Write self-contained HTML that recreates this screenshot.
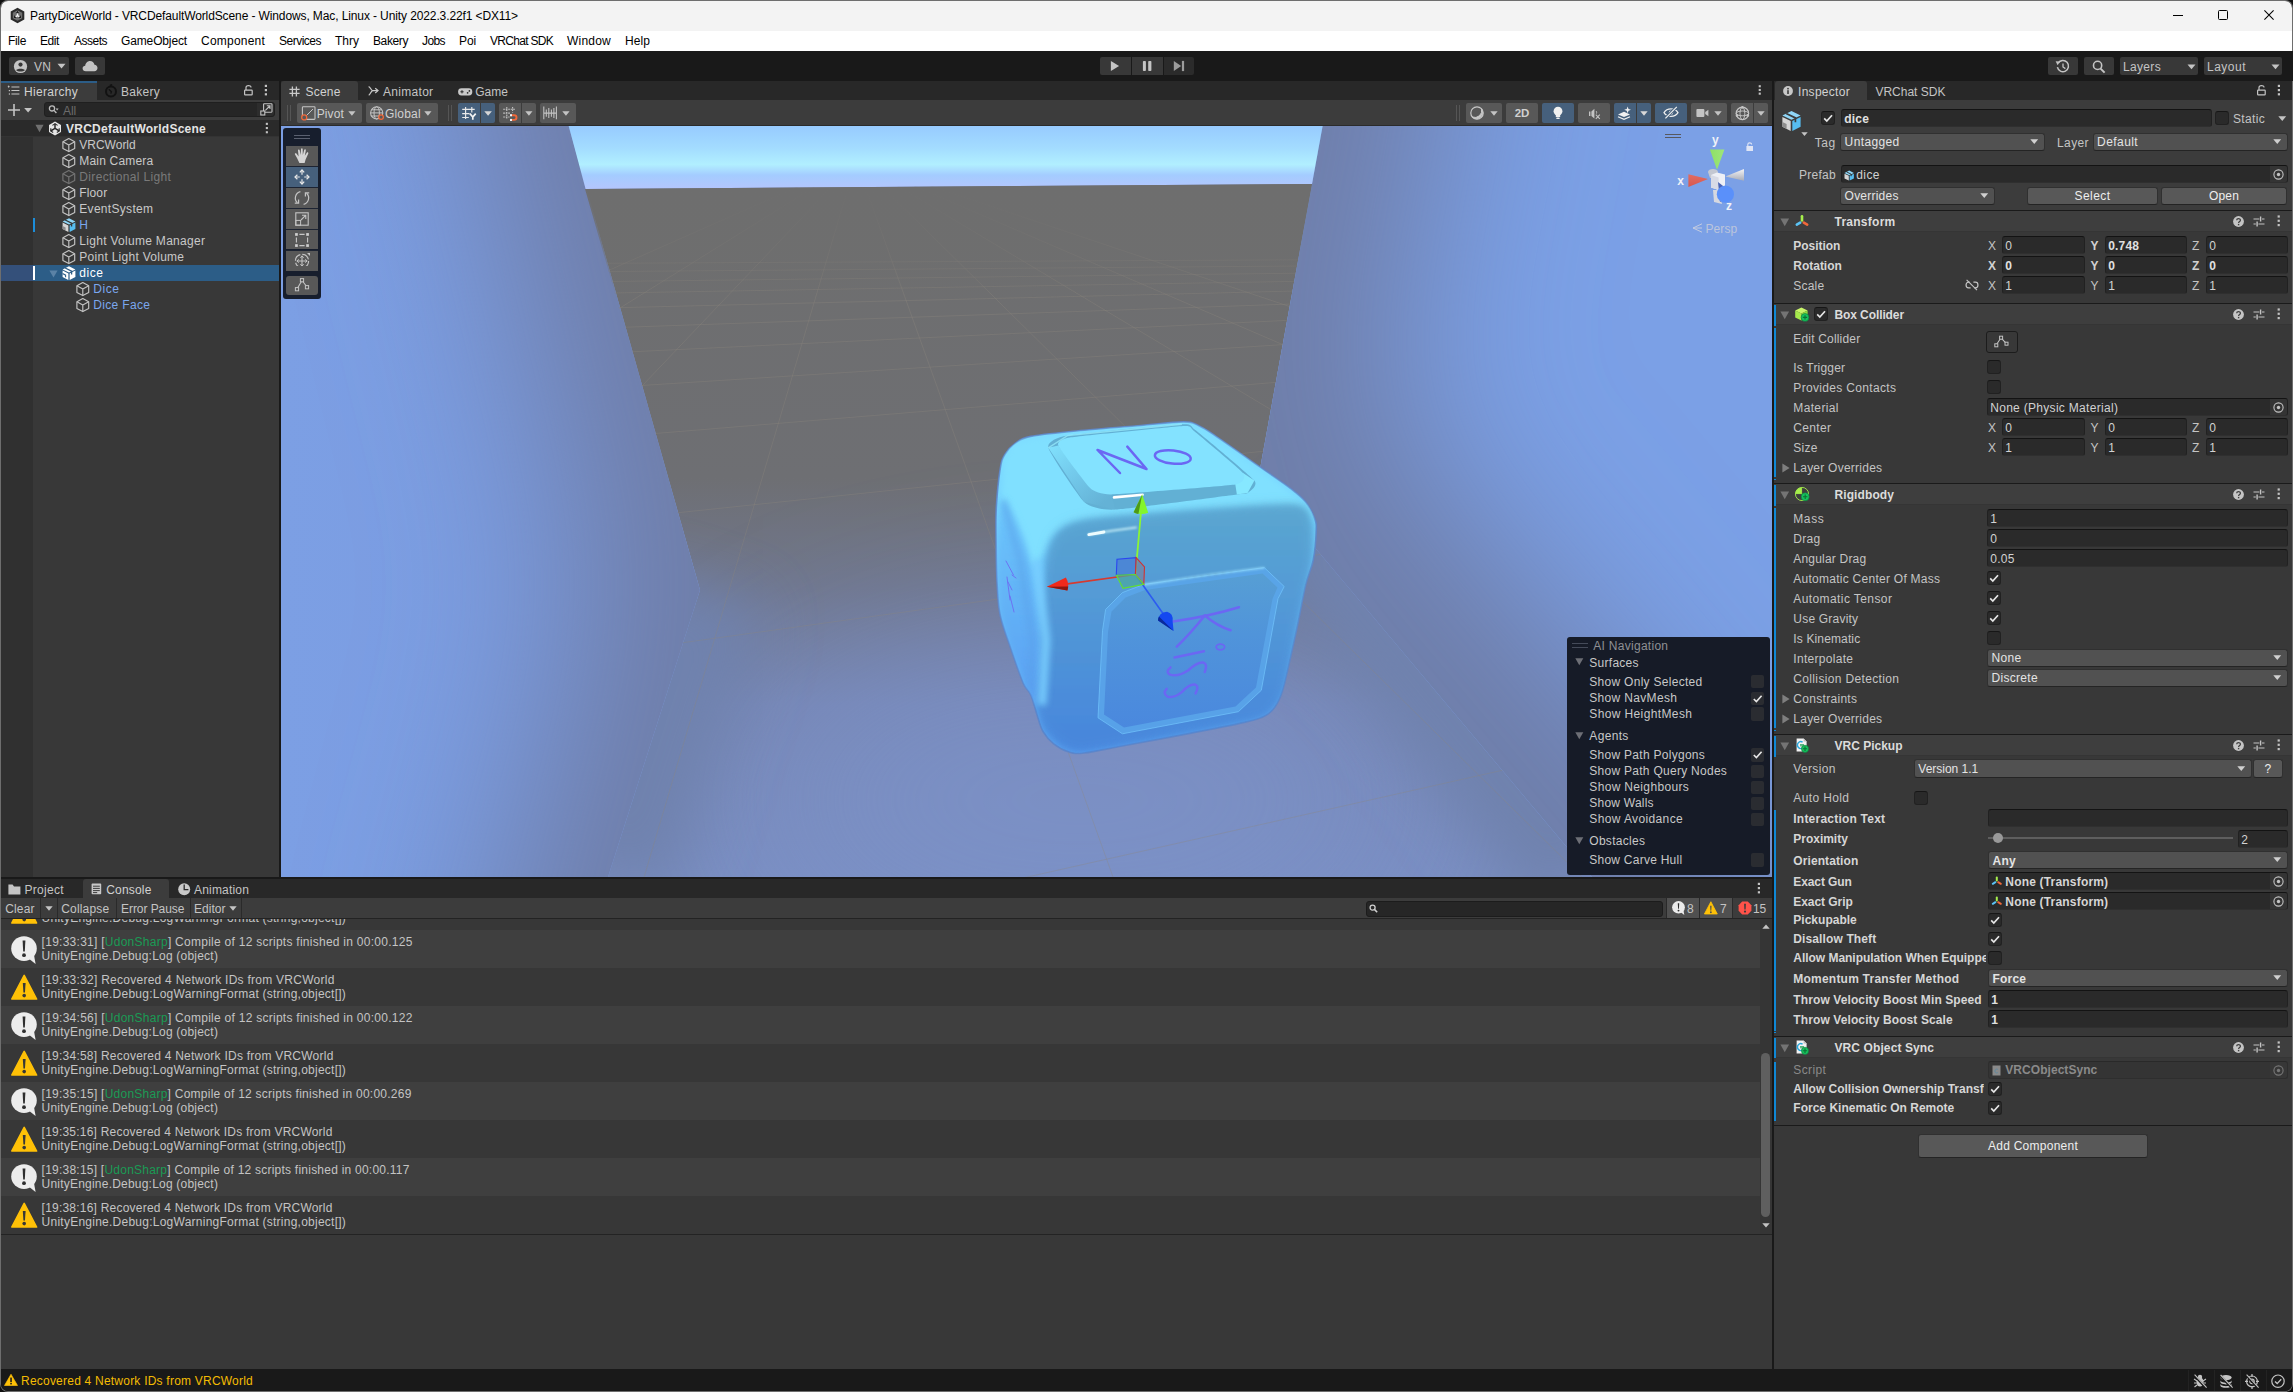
<!DOCTYPE html>
<html><head><meta charset="utf-8"><title>Unity</title>
<style>
html,body{margin:0;padding:0;background:#191919;}
body{width:2293px;height:1392px;position:relative;overflow:hidden;font-family:"Liberation Sans",sans-serif;font-size:12px;color:#c4c4c4;}
body div,body svg{position:absolute;box-sizing:border-box;}
svg{overflow:visible;display:block;}
</style></head><body>
<div style="left:0px;top:0px;width:2293px;height:1392px;background:#101010;"></div>
<div style="left:0px;top:0px;width:2293px;height:1392px;background:#6e6e6e;border-radius:8px;"></div>
<div style="left:1px;top:1px;width:2291px;height:1390px;background:#191919;border-radius:7px;"></div>
<div style="left:1px;top:1px;width:2291px;height:30px;background:#f3f3f3;border-radius:7px 7px 0 0;"></div>
<div style="left:1px;top:31px;width:2291px;height:20px;background:#ffffff;"></div>
<svg style="left:9px;top:7px;" width="17" height="17" viewBox="0 0 17 17"><path d="M8.5 0.8 L15.3 4.6 L15.3 12.4 L8.5 16.2 L1.7 12.4 L1.7 4.6 Z" fill="#2b2b2b"/>
    <path d="M8.5 3.2 L13.2 5.8 L13.2 11.2 L8.5 13.8 L3.8 11.2 L3.8 5.8 Z" fill="#6f6f6f"/>
    <path d="M8.5 4.2 L8.5 8.6 M8.5 8.6 L4.6 10.9 M8.5 8.6 L12.4 10.9" stroke="#f3f3f3" stroke-width="1.5" fill="none"/>
    <path d="M8.5 3.4 L10.2 6.2 L6.8 6.2 Z M4.2 11.3 L5.6 8.2 L7.4 11.0 Z M12.8 11.3 L11.4 8.2 L9.6 11.0 Z" fill="#1d1d1d"/></svg>
<div style="top:7.84px;font-size:12px;line-height:16px;letter-spacing:-0.111px;color:#000;white-space:nowrap;left:30px;">PartyDiceWorld - VRCDefaultWorldScene - Windows, Mac, Linux - Unity 2022.3.22f1 &lt;DX11&gt;</div>
<svg style="left:2160px;top:0px;" width="133" height="31" viewBox="0 0 133 31"><path d="M13 15.5 H23" stroke="#000" stroke-width="1"/>
    <rect x="58.5" y="10.5" width="9" height="9" fill="none" stroke="#000" stroke-width="1" rx="1"/>
    <path d="M104.4 10.4 L113.6 19.6 M113.6 10.4 L104.4 19.6" stroke="#000" stroke-width="1.05"/></svg>
<div style="top:32.84px;font-size:12px;line-height:16px;letter-spacing:-0.334px;color:#000;white-space:nowrap;left:8px;">File</div>
<div style="top:32.84px;font-size:12px;line-height:16px;letter-spacing:-0.420px;color:#000;white-space:nowrap;left:40px;">Edit</div>
<div style="top:32.84px;font-size:12px;line-height:16px;letter-spacing:-0.502px;color:#000;white-space:nowrap;left:74px;">Assets</div>
<div style="top:32.84px;font-size:12px;line-height:16px;letter-spacing:-0.136px;color:#000;white-space:nowrap;left:121px;">GameObject</div>
<div style="top:32.84px;font-size:12px;line-height:16px;letter-spacing:0.218px;color:#000;white-space:nowrap;left:201px;">Component</div>
<div style="top:32.84px;font-size:12px;line-height:16px;letter-spacing:-0.502px;color:#000;white-space:nowrap;left:279px;">Services</div>
<div style="top:32.84px;font-size:12px;line-height:16px;letter-spacing:0.000px;color:#000;white-space:nowrap;left:335px;">Thry</div>
<div style="top:32.84px;font-size:12px;line-height:16px;letter-spacing:-0.391px;color:#000;white-space:nowrap;left:373px;">Bakery</div>
<div style="top:32.84px;font-size:12px;line-height:16px;letter-spacing:-0.587px;color:#000;white-space:nowrap;left:422px;">Jobs</div>
<div style="top:32.84px;font-size:12px;line-height:16px;letter-spacing:-0.115px;color:#000;white-space:nowrap;left:459px;">Poi</div>
<div style="top:32.84px;font-size:12px;line-height:16px;letter-spacing:-0.703px;color:#000;white-space:nowrap;left:490px;">VRChat SDK</div>
<div style="top:32.84px;font-size:12px;line-height:16px;letter-spacing:0.220px;color:#000;white-space:nowrap;left:567px;">Window</div>
<div style="top:32.84px;font-size:12px;line-height:16px;letter-spacing:0.080px;color:#000;white-space:nowrap;left:625px;">Help</div>
<div style="left:1px;top:51px;width:2292px;height:30px;background:#191919;"></div>
<div style="left:9px;top:57px;width:60px;height:18px;background:#383838;border-radius:2px;"></div>
<div style="left:75px;top:57px;width:30px;height:18px;background:#383838;border-radius:2px;"></div>
<svg style="left:13px;top:59px;" width="15" height="15" viewBox="0 0 15 15"><circle cx="7.5" cy="7.5" r="6.6" fill="#c4c4c4"/><circle cx="7.5" cy="5.6" r="2.1" fill="#383838"/><path d="M3.2 11.2 C4 9.2 11 9.2 11.8 11.2 C10.5 13 4.5 13 3.2 11.2Z" fill="#383838"/></svg>
<div style="top:58.84px;font-size:12px;line-height:16px;letter-spacing:0.165px;color:#c4c4c4;white-space:nowrap;left:34px;">VN</div>
<svg style="left:57px;top:63px;" width="9" height="6" viewBox="0 0 9 6"><path d="M0.5 0.8 H8.5 L4.5 5.4Z" fill="#c4c4c4"/></svg>
<svg style="left:82px;top:60px;" width="16" height="12" viewBox="0 0 16 12"><path d="M3.8 11.2 C1.8 11.2 0.6 9.9 0.6 8.4 C0.6 6.9 1.8 5.8 3.2 5.8 C3.4 3.2 5.4 1 8 1 C10.3 1 12 2.6 12.5 4.8 C14.2 4.9 15.5 6.3 15.5 8 C15.5 9.8 14.1 11.2 12.4 11.2 Z" fill="#c4c4c4"/></svg>
<div style="left:1100px;top:57px;width:31px;height:18px;background:#383838;border-radius:2px 0 0 2px;"></div>
<div style="left:1132px;top:57px;width:31px;height:18px;background:#383838;"></div>
<div style="left:1164px;top:57px;width:30px;height:18px;background:#2b2b2b;border-radius:0 2px 2px 0;"></div>
<svg style="left:1100px;top:57px;" width="95" height="18" viewBox="0 0 95 18"><path d="M10.9 3.9 L19.1 9 L10.9 14.1Z" fill="#c4c4c4"/>
    <rect x="42.9" y="3.9" width="3" height="10.2" rx="0.8" fill="#c4c4c4"/><rect x="48.2" y="3.9" width="3.2" height="10.2" rx="0.8" fill="#c4c4c4"/>
    <path d="M73.8 3.9 L81.2 9 L73.8 14.1Z" fill="#9c9c9c"/><rect x="81.9" y="3.9" width="2.2" height="10.2" fill="#9c9c9c"/></svg>
<div style="left:2048px;top:57px;width:30px;height:18px;background:#383838;border-radius:2px;"></div>
<div style="left:2084px;top:57px;width:30px;height:18px;background:#383838;border-radius:2px;"></div>
<div style="left:2120px;top:57px;width:78px;height:18px;background:#383838;border-radius:2px;"></div>
<div style="left:2204px;top:57px;width:78px;height:18px;background:#383838;border-radius:2px;"></div>
<svg style="left:2055px;top:59px;" width="16" height="15" viewBox="0 0 16 15"><path d="M3.2 4.0 A5.6 5.6 0 1 1 2.4 8.2" fill="none" stroke="#c4c4c4" stroke-width="1.5"/><path d="M0.6 2.2 L4.9 2.6 L2.6 6.2Z" fill="#c4c4c4"/><path d="M8 4.4 V8 L10.4 9.6" fill="none" stroke="#c4c4c4" stroke-width="1.3"/></svg>
<svg style="left:2091px;top:59px;" width="16" height="15" viewBox="0 0 16 15"><circle cx="6.6" cy="6.4" r="4.1" fill="none" stroke="#c4c4c4" stroke-width="1.6"/><path d="M9.6 9.6 L13.6 13.6" stroke="#c4c4c4" stroke-width="2"/></svg>
<div style="top:58.84px;font-size:12px;line-height:16px;letter-spacing:0.330px;color:#c4c4c4;white-space:nowrap;left:2123px;">Layers</div>
<svg style="left:2187px;top:64.4px;" width="8.4" height="5.6" viewBox="0 0 8.4 5.6"><path d="M0.5 0.5 H8.5 L4.5 5.2Z" fill="#c4c4c4"/></svg>
<div style="top:58.84px;font-size:12px;line-height:16px;letter-spacing:0.495px;color:#c4c4c4;white-space:nowrap;left:2207px;">Layout</div>
<svg style="left:2270.8px;top:64.4px;" width="8.4" height="5.6" viewBox="0 0 8.4 5.6"><path d="M0.5 0.5 H8.5 L4.5 5.2Z" fill="#c4c4c4"/></svg>
<div style="left:1px;top:1369px;width:2291px;height:22px;background:#191919;border-radius:0 0 7px 7px;"></div>
<svg style="left:3.6px;top:1372.8px;" width="14" height="13.6" viewBox="0 0 17 15"><path d="M8.5 0.8 L16.4 14.4 H0.6Z" fill="#ffc107" stroke="#ffc107" stroke-width="0.8" stroke-linejoin="round"/><rect x="7.6" y="4.8" width="1.9" height="5.4" fill="#191919"/><rect x="7.6" y="11.2" width="1.9" height="1.9" fill="#191919"/></svg>
<div style="top:1372.84px;font-size:12px;line-height:16px;letter-spacing:0.221px;color:#f4bc02;white-space:nowrap;left:21px;">Recovered 4 Network IDs from VRCWorld</div>
<div style="left:2187.5px;top:1370px;width:1px;height:21px;background:#232323;"></div>
<div style="left:2213.5px;top:1370px;width:1px;height:21px;background:#232323;"></div>
<div style="left:2239.5px;top:1370px;width:1px;height:21px;background:#232323;"></div>
<div style="left:2265.5px;top:1370px;width:1px;height:21px;background:#232323;"></div>
<svg style="left:2192.4px;top:1373px;" width="16" height="16" viewBox="0 0 16 16"><ellipse cx="8" cy="9" rx="3.6" ry="4.6" fill="#c4c4c4"/><circle cx="8" cy="4" r="2.2" fill="#c4c4c4"/><path d="M2 6 L5 8 M2 10 H4.5 M2.5 14 L5 12 M14 6 L11 8 M14 10 H11.5 M13.5 14 L11 12" stroke="#c4c4c4" stroke-width="1.1"/><path d="M2 2 L14 15" stroke="#191919" stroke-width="2.4"/><path d="M2.6 1.6 L14.6 14.6" stroke="#c4c4c4" stroke-width="1.1"/></svg>
<svg style="left:2218.4px;top:1373px;" width="16" height="16" viewBox="0 0 16 16"><ellipse cx="8" cy="4.6" rx="5.6" ry="2.6" fill="#c4c4c4"/><path d="M2.4 7.2 C2.4 10.4 13.6 10.4 13.6 7.2 V9 C13.6 12.2 2.4 12.2 2.4 9Z M2.4 10.8 C2.4 14 13.6 14 13.6 10.8 V12.4 C13.6 15.6 2.4 15.6 2.4 12.4Z" fill="#c4c4c4"/><path d="M2 2.4 L14 15" stroke="#191919" stroke-width="2.4"/><path d="M2.6 2 L14.6 14.6" stroke="#c4c4c4" stroke-width="1.1"/></svg>
<svg style="left:2244.4px;top:1373px;" width="16" height="16" viewBox="0 0 16 16"><circle cx="8" cy="8.4" r="5.4" fill="none" stroke="#c4c4c4" stroke-width="1.2"/><circle cx="8" cy="8.4" r="2.2" fill="none" stroke="#c4c4c4" stroke-width="1.2"/><path d="M8 1 V4 M8 13 V16 M1 8.4 H4 M12 8.4 H15" stroke="#c4c4c4" stroke-width="1.2"/><path d="M2 2 L14 15" stroke="#191919" stroke-width="2.4"/><path d="M2.6 1.6 L14.6 14.6" stroke="#c4c4c4" stroke-width="1.1"/></svg>
<svg style="left:2270.4px;top:1373px;" width="16" height="16" viewBox="0 0 16 16"><circle cx="8" cy="8.2" r="6.2" fill="none" stroke="#c4c4c4" stroke-width="1.2"/><path d="M5 8.4 L7.2 10.6 L11.2 6.2" fill="none" stroke="#c4c4c4" stroke-width="1.4"/></svg>
<div style="left:1px;top:81px;width:278px;height:796px;background:#383838;"></div>
<div style="left:1px;top:81px;width:278px;height:19px;background:#282828;"></div>
<div style="left:1px;top:81px;width:96px;height:19px;background:#3c3c3c;"></div>
<div style="left:1px;top:81px;width:96px;height:2px;background:#2c5d87;"></div>
<svg style="left:8px;top:85px;" width="12" height="11" viewBox="0 0 12 11"><path d="M3.4 2 H11.4 M3.4 5.5 H11.4 M3.4 9 H11.4" stroke="#c4c4c4" stroke-width="1.1"/><path d="M0.6 0.6 V2.6 M-0.2 1.6 H1.6" stroke="#c4c4c4" stroke-width="0.9"/><rect x="0.8" y="5" width="1.2" height="1.2" fill="#c4c4c4"/><rect x="0.8" y="8.4" width="1.2" height="1.2" fill="#c4c4c4"/></svg>
<div style="top:83.84px;font-size:12px;line-height:16px;letter-spacing:0.295px;color:#d2d2d2;white-space:nowrap;left:24px;">Hierarchy</div>
<svg style="left:104px;top:84px;" width="14" height="14" viewBox="0 0 14 14"><circle cx="7" cy="7.6" r="5" fill="none" stroke="#121212" stroke-width="2"/><path d="M4.8 5.2 L7.4 7.8 L6.8 9.6" stroke="#121212" stroke-width="1.4" fill="none"/><path d="M5.8 1.6 L8.2 0.8" stroke="#121212" stroke-width="1.6"/></svg>
<div style="top:83.84px;font-size:12px;line-height:16px;letter-spacing:0.275px;color:#c4c4c4;white-space:nowrap;left:121px;">Bakery</div>
<svg style="left:243px;top:84px;" width="12" height="12" viewBox="0 0 12 12"><rect x="1.6" y="6.2" width="7.6" height="4.6" fill="none" stroke="#c4c4c4" stroke-width="1.2" rx="0.6"/><path d="M3 6 V3.6 C3 1 8 1 8 3.4" fill="none" stroke="#c4c4c4" stroke-width="1.2"/></svg>
<svg style="left:264px;top:84px;" width="4" height="13" viewBox="0 0 4 13"><rect x="0.8" y="0.8" width="2.2" height="2.2" fill="#c4c4c4"/><rect x="0.8" y="5" width="2.2" height="2.2" fill="#c4c4c4"/><rect x="0.8" y="9.2" width="2.2" height="2.2" fill="#c4c4c4"/></svg>
<div style="left:1px;top:100px;width:278px;height:20px;background:#3c3c3c;"></div>
<svg style="left:7px;top:103px;" width="26" height="14" viewBox="0 0 26 14"><path d="M1 7 H13 M7 1 V13" stroke="#c4c4c4" stroke-width="1.6"/><path d="M17.2 5 H25 L21.1 9.6Z" fill="#c4c4c4"/></svg>
<div style="left:44px;top:102px;width:231px;height:15px;background:#262626;border-radius:3px;border:1px solid #1f1f1f;"></div>
<div style="left:257px;top:103px;width:17px;height:13px;background:#2d2d2d;border-radius:0 3px 3px 0;"></div>
<svg style="left:48px;top:104px;" width="11" height="11" viewBox="0 0 11 11"><circle cx="4" cy="4.4" r="2.6" fill="none" stroke="#bdbdbd" stroke-width="1.3"/><path d="M6 6.4 L8.4 9" stroke="#bdbdbd" stroke-width="1.4"/><path d="M7.6 4.6 H10.6 L9.1 6.4Z" fill="#bdbdbd"/></svg>
<div style="top:102.84px;font-size:12px;line-height:16px;letter-spacing:-0.112px;color:#6b6b6b;white-space:nowrap;left:63px;">All</div>
<svg style="left:260px;top:103px;" width="13" height="13" viewBox="0 0 13 13"><rect x="3.6" y="0.8" width="8.4" height="8.4" fill="none" stroke="#c4c4c4" stroke-width="1.1" rx="0.6"/><rect x="0.8" y="8" width="4" height="4" fill="#2d2d2d" stroke="#c4c4c4" stroke-width="1.1"/><path d="M5.4 7.4 L9.8 3 M6.8 2.8 H10 V6" fill="none" stroke="#c4c4c4" stroke-width="1.1"/></svg>
<div style="left:1px;top:120px;width:32px;height:757px;background:#303030;"></div>
<div style="left:1px;top:120px;width:278px;height:16px;background:#2a2a2a;"></div>
<div style="left:1px;top:136px;width:278px;height:1px;background:#333333;"></div>
<svg style="left:35px;top:124px;" width="9" height="9" viewBox="0 0 9 9"><path d="M0.4 0.8 H8.6 L4.5 8.2Z" fill="#707070"/></svg>
<svg style="left:48px;top:121px;" width="14" height="15" viewBox="0 0 14 15"><path d="M7 0.6 L13 4 V11 L7 14.4 L1 11 V4Z" fill="#e6e6e6"/><path d="M7 2.4 V7.4 L2.6 10 M7 7.4 L11.4 10" stroke="#2a2a2a" stroke-width="1.5" fill="none"/><path d="M4.4 4.4 L7 2.8 L9.6 4.4 M2.8 7.2 V10 L5.2 11.4 M11.2 7.2 V10 L8.8 11.4" stroke="#2a2a2a" stroke-width="1.1" fill="none"/></svg>
<div style="top:120.84px;font-size:12px;line-height:16px;letter-spacing:0.243px;color:#e4e4e4;white-space:nowrap;font-weight:bold;left:66px;">VRCDefaultWorldScene</div>
<svg style="left:265px;top:122px;" width="4" height="13" viewBox="0 0 4 13"><rect x="0.8" y="0.8" width="2.1" height="2.1" fill="#c4c4c4"/><rect x="0.8" y="5" width="2.1" height="2.1" fill="#c4c4c4"/><rect x="0.8" y="9.2" width="2.1" height="2.1" fill="#c4c4c4"/></svg>
<svg style="left:60.5px;top:137px;" width="16" height="16" viewBox="0 0 16 16"><g fill="none" stroke="#c4c4c4" stroke-width="1.15" stroke-linejoin="round" opacity="1"><path d="M7.8 1.6 L13.7 4.8 V11.4 L7.8 14.6 L1.9 11.4 V4.8 Z"/><path d="M1.9 4.8 L7.8 8 L13.7 4.8 M7.8 8 V14.6"/></g></svg>
<div style="top:136.84px;font-size:12px;line-height:16px;letter-spacing:-0.007px;color:#c8c8c8;white-space:nowrap;left:79.3px;">VRCWorld</div>
<svg style="left:60.5px;top:153px;" width="16" height="16" viewBox="0 0 16 16"><g fill="none" stroke="#c4c4c4" stroke-width="1.15" stroke-linejoin="round" opacity="1"><path d="M7.8 1.6 L13.7 4.8 V11.4 L7.8 14.6 L1.9 11.4 V4.8 Z"/><path d="M1.9 4.8 L7.8 8 L13.7 4.8 M7.8 8 V14.6"/></g></svg>
<div style="top:152.84px;font-size:12px;line-height:16px;letter-spacing:0.180px;color:#c8c8c8;white-space:nowrap;left:79.3px;">Main Camera</div>
<svg style="left:60.5px;top:169px;" width="16" height="16" viewBox="0 0 16 16"><g fill="none" stroke="#c4c4c4" stroke-width="1.15" stroke-linejoin="round" opacity="0.42"><path d="M7.8 1.6 L13.7 4.8 V11.4 L7.8 14.6 L1.9 11.4 V4.8 Z"/><path d="M1.9 4.8 L7.8 8 L13.7 4.8 M7.8 8 V14.6"/></g></svg>
<div style="top:168.84px;font-size:12px;line-height:16px;letter-spacing:0.350px;color:#7a7a7a;white-space:nowrap;left:79.3px;">Directional Light</div>
<svg style="left:60.5px;top:185px;" width="16" height="16" viewBox="0 0 16 16"><g fill="none" stroke="#c4c4c4" stroke-width="1.15" stroke-linejoin="round" opacity="1"><path d="M7.8 1.6 L13.7 4.8 V11.4 L7.8 14.6 L1.9 11.4 V4.8 Z"/><path d="M1.9 4.8 L7.8 8 L13.7 4.8 M7.8 8 V14.6"/></g></svg>
<div style="top:184.84px;font-size:12px;line-height:16px;letter-spacing:0.132px;color:#c8c8c8;white-space:nowrap;left:79.3px;">Floor</div>
<svg style="left:60.5px;top:201px;" width="16" height="16" viewBox="0 0 16 16"><g fill="none" stroke="#c4c4c4" stroke-width="1.15" stroke-linejoin="round" opacity="1"><path d="M7.8 1.6 L13.7 4.8 V11.4 L7.8 14.6 L1.9 11.4 V4.8 Z"/><path d="M1.9 4.8 L7.8 8 L13.7 4.8 M7.8 8 V14.6"/></g></svg>
<div style="top:200.84px;font-size:12px;line-height:16px;letter-spacing:0.300px;color:#c8c8c8;white-space:nowrap;left:79.3px;">EventSystem</div>
<div style="left:33px;top:218px;width:2px;height:14px;background:#1c8dd9;"></div>
<svg style="left:60.5px;top:217px;" width="16" height="16" viewBox="0 0 16 16"><path d="M8 1.2 L14.4 4.4 L8 7.6 L1.6 4.4Z" fill="#8fd6f7"/><path d="M1.6 5.4 L7.4 8.4 V15 L1.6 12Z" fill="#d6d6d6"/><path d="M14.4 5.4 L8.6 8.4 V15 L14.4 12Z" fill="#57bdf0"/>
        <path d="M4.2 3.0 L10.6 6.2 V9.4" fill="none" stroke="#383838" stroke-width="1.3"/><path d="M1.6 9.0 L4.6 10.6 V13.4 L1.6 11.9Z" fill="#8a8a8a"/></svg>
<div style="top:216.84px;font-size:12px;line-height:16px;letter-spacing:-0.666px;color:#7ba7ee;white-space:nowrap;left:79.3px;">H</div>
<svg style="left:60.5px;top:233px;" width="16" height="16" viewBox="0 0 16 16"><g fill="none" stroke="#c4c4c4" stroke-width="1.15" stroke-linejoin="round" opacity="1"><path d="M7.8 1.6 L13.7 4.8 V11.4 L7.8 14.6 L1.9 11.4 V4.8 Z"/><path d="M1.9 4.8 L7.8 8 L13.7 4.8 M7.8 8 V14.6"/></g></svg>
<div style="top:232.84px;font-size:12px;line-height:16px;letter-spacing:0.296px;color:#c8c8c8;white-space:nowrap;left:79.3px;">Light Volume Manager</div>
<svg style="left:60.5px;top:249px;" width="16" height="16" viewBox="0 0 16 16"><g fill="none" stroke="#c4c4c4" stroke-width="1.15" stroke-linejoin="round" opacity="1"><path d="M7.8 1.6 L13.7 4.8 V11.4 L7.8 14.6 L1.9 11.4 V4.8 Z"/><path d="M1.9 4.8 L7.8 8 L13.7 4.8 M7.8 8 V14.6"/></g></svg>
<div style="top:248.84px;font-size:12px;line-height:16px;letter-spacing:0.274px;color:#c8c8c8;white-space:nowrap;left:79.3px;">Point Light Volume</div>
<div style="left:1px;top:265px;width:278px;height:16px;background:#2c5d87;"></div>
<div style="left:1px;top:265px;width:32px;height:16px;background:#34507a;"></div>
<div style="left:33px;top:266px;width:2px;height:14px;background:#ffffff;"></div>
<svg style="left:49px;top:270px;" width="9" height="8" viewBox="0 0 9 8"><path d="M0.4 0.4 H8.6 L4.5 7.6Z" fill="#5b82a6"/></svg>
<svg style="left:60.5px;top:265px;" width="16" height="16" viewBox="0 0 16 16"><path d="M8 1.2 L14.4 4.4 L8 7.6 L1.6 4.4Z" fill="#fff"/><path d="M1.6 5.4 L7.4 8.4 V15 L1.6 12Z" fill="#fff"/><path d="M14.4 5.4 L8.6 8.4 V15 L14.4 12Z" fill="#fff"/>
        <path d="M4.2 3.0 L10.6 6.2 V9.4" fill="none" stroke="#2c5d87" stroke-width="1.3"/><path d="M1.6 8.6 L4.6 10.2 V12.2" fill="none" stroke="#2c5d87" stroke-width="1.1"/></svg>
<div style="top:264.84px;font-size:12px;line-height:16px;letter-spacing:0.497px;color:#ffffff;white-space:nowrap;left:79.3px;">dice</div>
<svg style="left:74.5px;top:281px;" width="16" height="16" viewBox="0 0 16 16"><g fill="none" stroke="#c4c4c4" stroke-width="1.15" stroke-linejoin="round" opacity="1"><path d="M7.8 1.6 L13.7 4.8 V11.4 L7.8 14.6 L1.9 11.4 V4.8 Z"/><path d="M1.9 4.8 L7.8 8 L13.7 4.8 M7.8 8 V14.6"/></g></svg>
<div style="top:280.84px;font-size:12px;line-height:16px;letter-spacing:0.499px;color:#7ba7ee;white-space:nowrap;left:93.3px;">Dice</div>
<svg style="left:74.5px;top:297px;" width="16" height="16" viewBox="0 0 16 16"><g fill="none" stroke="#c4c4c4" stroke-width="1.15" stroke-linejoin="round" opacity="1"><path d="M7.8 1.6 L13.7 4.8 V11.4 L7.8 14.6 L1.9 11.4 V4.8 Z"/><path d="M1.9 4.8 L7.8 8 L13.7 4.8 M7.8 8 V14.6"/></g></svg>
<div style="top:296.84px;font-size:12px;line-height:16px;letter-spacing:0.332px;color:#7ba7ee;white-space:nowrap;left:93.3px;">Dice Face</div>
<div style="left:281px;top:81px;width:1491px;height:796px;background:#383838;"></div>
<div style="left:281px;top:81px;width:1491px;height:19px;background:#282828;"></div>
<div style="left:281px;top:81px;width:77px;height:19px;background:#3c3c3c;border-radius:3px 3px 0 0;"></div>
<svg style="left:289px;top:85.5px;" width="11" height="11" viewBox="0 0 11 11"><path d="M3.4 0.6 V10.6 M7.4 0.6 V10.6 M0.4 3.4 H10.6 M0.4 7.4 H10.6" stroke="#c8c8c8" stroke-width="1.3"/></svg>
<div style="top:83.84px;font-size:12px;line-height:16px;letter-spacing:0.255px;color:#d2d2d2;white-space:nowrap;left:305.4px;">Scene</div>
<svg style="left:368.4px;top:86px;" width="11" height="10" viewBox="0 0 11 10"><path d="M0.6 0.6 C2.4 0.8 3 4.4 4.4 4.6 H9.6 M0.7 9.2 C2 8.6 3 5.4 4.4 4.6" fill="none" stroke="#c8c8c8" stroke-width="1.25"/><path d="M7.2 2.2 L10 4.6 L7.2 7" fill="none" stroke="#c8c8c8" stroke-width="1.25"/></svg>
<div style="top:83.84px;font-size:12px;line-height:16px;letter-spacing:0.298px;color:#c4c4c4;white-space:nowrap;left:383px;">Animator</div>
<svg style="left:457.8px;top:88px;" width="14.4" height="8" viewBox="0 0 14.4 8"><rect x="0.1" y="0.2" width="14.2" height="7.2" rx="3.4" fill="#c8c8c8"/><path d="M2.4 3.8 H5.6 M4 2.2 V5.4" stroke="#282828" stroke-width="1"/><circle cx="9.6" cy="4.8" r="0.85" fill="#282828"/><circle cx="11.4" cy="2.9" r="0.85" fill="#282828"/></svg>
<div style="top:83.84px;font-size:12px;line-height:16px;letter-spacing:0.030px;color:#c4c4c4;white-space:nowrap;left:475.2px;">Game</div>
<svg style="left:1757.5px;top:85px;" width="4" height="11" viewBox="0 0 4 11"><rect x="0.7" y="0.2" width="2.1" height="2.1" fill="#c4c4c4"/><rect x="0.7" y="3.9" width="2.1" height="2.1" fill="#c4c4c4"/><rect x="0.7" y="7.6" width="2.1" height="2.1" fill="#c4c4c4"/></svg>
<div style="left:281px;top:100px;width:1491px;height:26px;background:#3c3c3c;"></div>
<div style="left:281px;top:125px;width:1491px;height:1px;background:#2b2b2b;"></div>
<div style="left:287.4px;top:105px;width:1px;height:16px;background:#555;"></div>
<div style="left:290.4px;top:105px;width:1px;height:16px;background:#555;"></div>
<div style="left:297px;top:103px;width:65px;height:20px;background:#585858;border-radius:2px;"></div>
<svg style="left:300.6px;top:106px;" width="15" height="15" viewBox="0 0 15 15"><rect x="1.4" y="0.8" width="12.6" height="12.6" fill="none" stroke="#c4c4c4" stroke-width="1.1" rx="0.8"/><path d="M5 10 L12 3" stroke="#c4c4c4" stroke-width="1"/><circle cx="3.2" cy="11.4" r="2.5" fill="#585858" stroke="#f0683a" stroke-width="1.3"/></svg>
<div style="top:105.84px;font-size:12px;line-height:16px;letter-spacing:0.124px;color:#d0d0d0;white-space:nowrap;left:316.7px;">Pivot</div>
<svg style="left:348.3px;top:110.8px;" width="7.8" height="5" viewBox="0 0 7.8 5"><path d="M0.3 0.3 H7.5 L3.9 4.8Z" fill="#c4c4c4"/></svg>
<div style="left:366px;top:103px;width:72px;height:20px;background:#585858;border-radius:2px;"></div>
<svg style="left:370px;top:106px;" width="15" height="15" viewBox="0 0 15 15"><circle cx="6.7" cy="6.9" r="6.1" fill="none" stroke="#c4c4c4" stroke-width="1.1"/><ellipse cx="6.7" cy="6.9" rx="2.7" ry="6.1" fill="none" stroke="#c4c4c4" stroke-width="1"/><path d="M0.6 6.9 H12.8 M1.6 3.8 H11.8 M1.6 10 H11.8" stroke="#c4c4c4" stroke-width="1"/><circle cx="11.1" cy="11.1" r="2.3" fill="#585858" stroke="#f0683a" stroke-width="1.25"/></svg>
<div style="top:105.84px;font-size:12px;line-height:16px;letter-spacing:0.219px;color:#d0d0d0;white-space:nowrap;left:384.9px;">Global</div>
<svg style="left:424.4px;top:110.8px;" width="7.8" height="5" viewBox="0 0 7.8 5"><path d="M0.3 0.3 H7.5 L3.9 4.8Z" fill="#c4c4c4"/></svg>
<div style="left:448px;top:105px;width:1px;height:16px;background:#555;"></div>
<div style="left:451px;top:105px;width:1px;height:16px;background:#555;"></div>
<div style="left:458px;top:103px;width:22.2px;height:20px;background:#46607c;border-radius:2px 0 0 2px;"></div>
<div style="left:481px;top:103px;width:14.2px;height:20px;background:#46607c;border-radius:0 2px 2px 0;"></div>
<svg style="left:461px;top:105.5px;" width="17" height="15" viewBox="0 0 17 15"><path d="M4.6 0.9 V12.9 M10.8 0.9 V6.4 M1.2 3.3 H13.7 M1.2 7.6 H8.6 M1.2 11.5 H7.8" stroke="#eaeaea" stroke-width="1.15"/><path d="M8.9 7.6 L11.8 11 L14.7 7.6 M11.8 11 V13.8" fill="none" stroke="#f4f4f4" stroke-width="1.7"/></svg>
<svg style="left:483.8px;top:110.8px;" width="8.2" height="5" viewBox="0 0 8.2 5"><path d="M0.3 0.3 H7.9 L4.1 4.8Z" fill="#d6d6d6"/></svg>
<div style="left:499.2px;top:103px;width:21.8px;height:20px;background:#585858;border-radius:2px 0 0 2px;"></div>
<div style="left:522px;top:103px;width:14px;height:20px;background:#585858;border-radius:0 2px 2px 0;"></div>
<svg style="left:502px;top:105.5px;" width="17" height="15" viewBox="0 0 17 15"><path d="M4.8 0.9 V12.9 M10.6 0.9 V6.6 M1.2 3.3 H13.4 M1.2 7.1 H8 M1.2 11 H7.6" stroke="#c4c4c4" stroke-width="1.1" stroke-dasharray="1.7 0.8"/><path d="M9.6 9.3 H12.2 A2.2 2.2 0 0 1 12.2 13.9 H9.6" fill="none" stroke="#f0683a" stroke-width="1.9"/><rect x="8" y="8.2" width="2" height="2.1" fill="#f4f4f4"/><rect x="8" y="12.9" width="2" height="2.1" fill="#f4f4f4"/></svg>
<svg style="left:525.2px;top:110.8px;" width="7.8" height="5" viewBox="0 0 7.8 5"><path d="M0.3 0.3 H7.5 L3.9 4.8Z" fill="#c4c4c4"/></svg>
<div style="left:540.2px;top:103px;width:35.8px;height:20px;background:#585858;border-radius:2px;"></div>
<svg style="left:543.4px;top:106px;" width="15" height="14" viewBox="0 0 15 14"><path d="M0.6 7.1 H13.6 M0.8 0.6 V13.2 M13.4 0.6 V13.2 M3.3 3.4 V10.8 M5.8 2 V12 M8.4 3.4 V10.8 M10.9 2 V12" stroke="#c4c4c4" stroke-width="1.05"/></svg>
<svg style="left:561.8px;top:110.8px;" width="7.9" height="5" viewBox="0 0 7.9 5"><path d="M0.3 0.3 H7.6 L3.95 4.8Z" fill="#c4c4c4"/></svg>
<div style="left:1456px;top:105px;width:1px;height:16px;background:#555;"></div>
<div style="left:1459.4px;top:105px;width:1px;height:16px;background:#555;"></div>
<div style="left:1466px;top:103px;width:36px;height:20px;background:#585858;border-radius:2px;"></div>
<svg style="left:1469.6px;top:106.4px;" width="15" height="14" viewBox="0 0 15 14"><circle cx="7" cy="7" r="6.2" fill="none" stroke="#c8c8c8" stroke-width="1.2"/><path d="M11.6 3 A6.2 6.2 0 0 1 2.2 11 A7 7 0 0 0 11.6 3Z" fill="#c8c8c8" stroke="#c8c8c8" stroke-width="1"/></svg>
<svg style="left:1489.6px;top:110.5px;" width="8" height="5" viewBox="0 0 8 5"><path d="M0.3 0.3 H7.7 L4 4.8Z" fill="#c4c4c4"/></svg>
<div style="left:1506px;top:103px;width:32px;height:20px;background:#585858;border-radius:2px;"></div>
<div style="top:106.27px;font-size:11.5px;line-height:15.5px;letter-spacing:-0.150px;color:#d0d0d0;white-space:nowrap;font-weight:bold;left:1514.8px;">2D</div>
<div style="left:1542px;top:103px;width:32.2px;height:20px;background:#46607c;border-radius:2px;"></div>
<svg style="left:1553px;top:105.6px;" width="10" height="15" viewBox="0 0 10 15"><circle cx="5" cy="5.2" r="4.4" fill="#f0f0f0"/><rect x="2.8" y="8.4" width="4.4" height="2.6" fill="#f0f0f0"/><rect x="3.3" y="11.6" width="3.4" height="1.5" rx="0.7" fill="#f0f0f0"/></svg>
<div style="left:1577.9px;top:103px;width:32.1px;height:20px;background:#585858;border-radius:2px;"></div>
<svg style="left:1587.6px;top:107.6px;" width="14" height="12" viewBox="0 0 14 12"><path d="M1 3.4 H2.4 V8 H1Z M3.4 3.4 L6.4 0.8 V10.6 L3.4 8Z" fill="#c4c4c4"/><path d="M7.8 6.6 L11.8 10.8 M11.8 6.6 L7.8 10.8" stroke="#c4c4c4" stroke-width="1.1"/><path d="M8 3 C8.8 3.8 8.8 5 8.4 5.6" stroke="#c4c4c4" stroke-width="1" fill="none"/></svg>
<div style="left:1613.8px;top:103px;width:22.2px;height:20px;background:#46607c;border-radius:2px 0 0 2px;"></div>
<div style="left:1636.8px;top:103px;width:14.4px;height:20px;background:#46607c;border-radius:0 2px 2px 0;"></div>
<svg style="left:1617px;top:106px;" width="16" height="14" viewBox="0 0 16 14"><path d="M1 8.4 L7 5.8 L13 8.4 L7 11 Z" fill="#f0f0f0"/><path d="M1 10.8 L7 13.4 L13 10.8" fill="none" stroke="#f0f0f0" stroke-width="1.2"/><path d="M10.6 0.4 L11.5 2.9 L14 3.8 L11.5 4.7 L10.6 7.2 L9.7 4.7 L7.2 3.8 L9.7 2.9Z" fill="#f0f0f0"/></svg>
<svg style="left:1640px;top:110.5px;" width="8" height="5" viewBox="0 0 8 5"><path d="M0.3 0.3 H7.7 L4 4.8Z" fill="#d8d8d8"/></svg>
<div style="left:1655px;top:103px;width:32.2px;height:20px;background:#46607c;border-radius:2px;"></div>
<svg style="left:1663.4px;top:106.4px;" width="16" height="13" viewBox="0 0 16 13"><path d="M1 6.6 C4 1.6 12 1.6 15 6.6 C12 11.6 4 11.6 1 6.6Z" fill="none" stroke="#f0f0f0" stroke-width="1.2"/><circle cx="8" cy="6.6" r="2.2" fill="#f0f0f0"/><path d="M2.4 12.4 L13.8 0.8" stroke="#46607c" stroke-width="3"/><path d="M2.4 12.4 L13.8 0.8" stroke="#f0f0f0" stroke-width="1.2"/></svg>
<div style="left:1691px;top:103px;width:36px;height:20px;background:#585858;border-radius:2px;"></div>
<svg style="left:1695.6px;top:108px;" width="13" height="10" viewBox="0 0 13 10"><rect x="0.4" y="1" width="8" height="8" rx="1" fill="#c4c4c4"/><path d="M9.2 4 L12.4 1.8 V8.2 L9.2 6Z" fill="#c4c4c4"/></svg>
<svg style="left:1714px;top:110.5px;" width="8" height="5" viewBox="0 0 8 5"><path d="M0.3 0.3 H7.7 L4 4.8Z" fill="#c4c4c4"/></svg>
<div style="left:1731px;top:103px;width:22px;height:20px;background:#585858;border-radius:2px 0 0 2px;"></div>
<div style="left:1753.7px;top:103px;width:14.3px;height:20px;background:#585858;border-radius:0 2px 2px 0;"></div>
<svg style="left:1734.6px;top:105.6px;" width="15" height="15" viewBox="0 0 15 15"><circle cx="7.4" cy="7.4" r="6.2" fill="none" stroke="#c4c4c4" stroke-width="1.2"/><ellipse cx="7.4" cy="7.4" rx="6.2" ry="2.4" fill="none" stroke="#c4c4c4" stroke-width="1"/><ellipse cx="7.4" cy="7.4" rx="2.4" ry="6.2" fill="none" stroke="#c4c4c4" stroke-width="1"/><circle cx="7.4" cy="1.4" r="1.3" fill="#c4c4c4"/><circle cx="2" cy="9.6" r="1.3" fill="#c4c4c4"/><circle cx="12.8" cy="9.6" r="1.3" fill="#c4c4c4"/></svg>
<svg style="left:1756.8px;top:110.5px;" width="8" height="5" viewBox="0 0 8 5"><path d="M0.3 0.3 H7.7 L4 4.8Z" fill="#c4c4c4"/></svg>
<svg style="left:281px;top:126px;overflow:hidden;" width="1491" height="751" viewBox="281 126 1491 751"><defs>
    <linearGradient id="sky" x1="0" y1="126" x2="0" y2="189" gradientUnits="userSpaceOnUse">
      <stop offset="0" stop-color="#97cbff"/><stop offset="0.35" stop-color="#a3dcff"/><stop offset="0.61" stop-color="#b1efff"/><stop offset="0.78" stop-color="#a4ccff"/><stop offset="1" stop-color="#b4c5fd"/></linearGradient>
    <linearGradient id="floor" x1="0" y1="189" x2="0" y2="877" gradientUnits="userSpaceOnUse">
      <stop offset="0" stop-color="#6e6e6e"/><stop offset="0.42" stop-color="#6e6f73"/><stop offset="0.58" stop-color="#70778e"/><stop offset="0.75" stop-color="#7686b4"/><stop offset="1" stop-color="#7a8ec2"/></linearGradient>
    <linearGradient id="gfade" x1="0" y1="186" x2="0" y2="300" gradientUnits="userSpaceOnUse"><stop offset="0" stop-color="#6e6e6e" stop-opacity="1"/><stop offset="0.25" stop-color="#6e6e6e" stop-opacity="0.85"/><stop offset="1" stop-color="#6e6e6e" stop-opacity="0"/></linearGradient>
    <linearGradient id="lwg" x1="281" y1="0" x2="700" y2="0" gradientUnits="userSpaceOnUse"><stop offset="0" stop-color="#7c9fe4"/><stop offset="1" stop-color="#7a9ade"/></linearGradient>
    <filter id="b60" filterUnits="userSpaceOnUse" x="-200" y="-300" width="2600" height="1800"><feGaussianBlur stdDeviation="90"/></filter>
    <filter id="b30" filterUnits="userSpaceOnUse" x="-200" y="-300" width="2600" height="1800"><feGaussianBlur stdDeviation="30"/></filter>
    <clipPath id="clw"><path d="M281 126 H568.7 L700 590 L608 877 H281Z"/></clipPath>
    <clipPath id="crw"><path d="M1322.6 126 H1772 V877 H1592 L1258 480Z"/></clipPath>
    <clipPath id="cfl"><path d="M585 189 L1312 184 L1258 480 L1592 877 L608 877 L700 590 Z"/></clipPath>
    </defs>
    <rect x="281" y="126" width="1491" height="751" fill="#7690c8"/>
    <g clip-path="url(#cfl)">
      <rect x="281" y="126" width="1491" height="751" fill="url(#floor)"/>
      <ellipse cx="1080" cy="800" rx="330" ry="150" fill="#7d93c9" opacity="0.7" filter="url(#b60)"/>
      <path d="M700 590 L608 877" stroke="#7082ae" stroke-width="130" fill="none" filter="url(#b30)" opacity="1"/>
      <path d="M1300 510 L1592 877" stroke="#7082ae" stroke-width="130" fill="none" filter="url(#b30)" opacity="1"/>
    </g>
    <g clip-path="url(#clw)">
      <rect x="281" y="126" width="500" height="751" fill="url(#lwg)"/>
      <path d="M575 -100 L745 590 L610 1100" stroke="#6e7da7" stroke-width="300" fill="none" filter="url(#b60)"/>
    </g>
    <g clip-path="url(#crw)">
      <rect x="1200" y="126" width="572" height="751" fill="#7ba0e6"/>
      <path d="M1330 -100 L1225 460 L1730 1060" stroke="#6e7da7" stroke-width="300" fill="none" filter="url(#b60)"/>
    </g>
    <path d="M568.7 126 H1322.6 L1312 184 L585.6 189Z" fill="url(#sky)"/>
    <g clip-path="url(#cfl)"><path d="M799.5 186.0 L-814.9 900.0 M815.9 186.0 L-330.8 900.0 M832.2 186.0 L153.2 900.0 M848.6 186.0 L637.3 900.0 M865.0 186.0 L1121.3 900.0 M881.4 186.0 L1605.3 900.0 M897.7 186.0 L2089.4 900.0 M914.1 186.0 L2573.4 900.0 M930.5 186.0 L3057.5 900.0 M500.0 263.8 L1800.0 257.3 M500.0 272.4 L1800.0 262.0 M500.0 282.8 L1800.0 267.2 M500.0 294.9 L1800.0 272.8 M500.0 310.6 L1800.0 278.6 M500.0 331.6 L1800.0 286.3 M500.0 358.1 L1800.0 295.8 M500.0 394.5 L1800.0 311.7 M500.0 446.3 L1800.0 339.2 M500.0 531.4 L1800.0 394.9 M500.0 668.0 L1800.0 488.0 M500.0 995.5 L1800.0 703.4" stroke="#8c877e" stroke-width="1" fill="none" opacity="0.34"/><rect x="560" y="180" width="780" height="130" fill="url(#gfade)"/></g><defs>
    <linearGradient id="dout" x1="0" y1="420" x2="0" y2="755" gradientUnits="userSpaceOnUse"><stop offset="0" stop-color="#7fdcff"/><stop offset="0.3" stop-color="#74d2ff"/><stop offset="0.6" stop-color="#66baf8"/><stop offset="1" stop-color="#5aa4f2"/></linearGradient>
    <linearGradient id="dfront" x1="0" y1="510" x2="0" y2="750" gradientUnits="userSpaceOnUse"><stop offset="0" stop-color="#5ba6d0"/><stop offset="0.35" stop-color="#549bd6"/><stop offset="1" stop-color="#4886dc"/></linearGradient>
    <linearGradient id="dflank" x1="1050" y1="446" x2="1100" y2="506" gradientUnits="userSpaceOnUse"><stop offset="0" stop-color="#80e0fc"/><stop offset="0.5" stop-color="#72c8ea"/><stop offset="1" stop-color="#64b2d6"/></linearGradient>
    <linearGradient id="dleft" x1="0" y1="500" x2="0" y2="700" gradientUnits="userSpaceOnUse"><stop offset="0" stop-color="#6cc6fb"/><stop offset="1" stop-color="#5a9ff2"/></linearGradient>
    <linearGradient id="dpanel" x1="0" y1="570" x2="0" y2="730" gradientUnits="userSpaceOnUse"><stop offset="0" stop-color="#579fd4"/><stop offset="0.4" stop-color="#5094da"/><stop offset="1" stop-color="#4a88de"/></linearGradient>
    <filter id="db3" filterUnits="userSpaceOnUse" x="950" y="380" width="420" height="420"><feGaussianBlur stdDeviation="3"/></filter>
    <filter id="db6" filterUnits="userSpaceOnUse" x="950" y="380" width="420" height="420"><feGaussianBlur stdDeviation="6"/></filter>
    <filter id="db05" filterUnits="userSpaceOnUse" x="950" y="380" width="420" height="420"><feGaussianBlur stdDeviation="0.6"/></filter>
    <filter id="db1" filterUnits="userSpaceOnUse" x="950" y="380" width="420" height="420"><feGaussianBlur stdDeviation="1.2"/></filter>
    <clipPath id="cdice"><path d="M996.4 506.6 C997.1 493.8 998.9 477.0 1000.3 468.4 C1001.7 459.8 1002.3 458.9 1004.8 454.7 C1007.3 450.5 1011.2 446.2 1015.5 443.2 C1019.8 440.1 1020.6 438.4 1030.8 436.4 C1041.0 434.4 1058.8 432.8 1076.6 431.0 C1094.4 429.2 1119.8 427.2 1137.6 425.7 C1155.4 424.2 1173.2 421.9 1183.4 421.9 C1193.6 421.9 1193.6 423.5 1198.7 425.7 C1203.8 427.9 1203.8 427.9 1214.0 434.8 C1224.2 441.7 1247.1 458.0 1259.8 466.9 C1272.5 475.8 1282.7 482.4 1290.3 488.3 C1297.9 494.2 1301.5 496.9 1305.6 502.0 C1309.7 507.1 1312.9 514.0 1314.7 518.8 C1316.5 523.6 1316.5 524.1 1316.2 531.0 C1316.0 537.9 1315.0 551.0 1313.2 560.0 C1311.4 569.0 1308.1 574.5 1305.6 585.0 C1303.1 595.5 1300.5 610.8 1298.0 623.0 C1295.5 635.2 1292.8 647.1 1290.3 658.3 C1287.8 669.5 1285.2 682.2 1282.7 690.3 C1280.2 698.4 1278.1 702.7 1275.0 707.0 C1271.9 711.3 1269.4 713.7 1264.3 716.3 C1259.2 718.9 1258.0 719.3 1244.5 722.4 C1231.0 725.5 1203.8 730.7 1183.4 734.6 C1163.1 738.5 1138.9 742.9 1122.4 746.0 C1105.9 749.1 1093.1 752.0 1084.2 753.0 C1075.3 754.0 1074.1 753.5 1069.0 752.0 C1063.9 750.5 1058.0 747.2 1053.7 743.8 C1049.4 740.4 1045.8 736.3 1043.0 731.5 C1040.2 726.7 1039.0 720.9 1037.0 714.8 C1035.0 708.7 1033.1 700.4 1030.8 695.0 C1028.5 689.6 1026.3 690.4 1023.0 682.7 C1019.7 675.0 1014.8 660.2 1011.0 649.0 C1007.2 637.8 1002.6 626.2 1000.3 615.5 C998.0 604.8 997.9 596.8 997.2 585.0 C996.5 573.2 996.3 558.1 996.2 545.0 C996.1 531.9 995.7 519.4 996.4 506.6Z"/></clipPath>
    </defs>
    <path d="M996.4 506.6 C997.1 493.8 998.9 477.0 1000.3 468.4 C1001.7 459.8 1002.3 458.9 1004.8 454.7 C1007.3 450.5 1011.2 446.2 1015.5 443.2 C1019.8 440.1 1020.6 438.4 1030.8 436.4 C1041.0 434.4 1058.8 432.8 1076.6 431.0 C1094.4 429.2 1119.8 427.2 1137.6 425.7 C1155.4 424.2 1173.2 421.9 1183.4 421.9 C1193.6 421.9 1193.6 423.5 1198.7 425.7 C1203.8 427.9 1203.8 427.9 1214.0 434.8 C1224.2 441.7 1247.1 458.0 1259.8 466.9 C1272.5 475.8 1282.7 482.4 1290.3 488.3 C1297.9 494.2 1301.5 496.9 1305.6 502.0 C1309.7 507.1 1312.9 514.0 1314.7 518.8 C1316.5 523.6 1316.5 524.1 1316.2 531.0 C1316.0 537.9 1315.0 551.0 1313.2 560.0 C1311.4 569.0 1308.1 574.5 1305.6 585.0 C1303.1 595.5 1300.5 610.8 1298.0 623.0 C1295.5 635.2 1292.8 647.1 1290.3 658.3 C1287.8 669.5 1285.2 682.2 1282.7 690.3 C1280.2 698.4 1278.1 702.7 1275.0 707.0 C1271.9 711.3 1269.4 713.7 1264.3 716.3 C1259.2 718.9 1258.0 719.3 1244.5 722.4 C1231.0 725.5 1203.8 730.7 1183.4 734.6 C1163.1 738.5 1138.9 742.9 1122.4 746.0 C1105.9 749.1 1093.1 752.0 1084.2 753.0 C1075.3 754.0 1074.1 753.5 1069.0 752.0 C1063.9 750.5 1058.0 747.2 1053.7 743.8 C1049.4 740.4 1045.8 736.3 1043.0 731.5 C1040.2 726.7 1039.0 720.9 1037.0 714.8 C1035.0 708.7 1033.1 700.4 1030.8 695.0 C1028.5 689.6 1026.3 690.4 1023.0 682.7 C1019.7 675.0 1014.8 660.2 1011.0 649.0 C1007.2 637.8 1002.6 626.2 1000.3 615.5 C998.0 604.8 997.9 596.8 997.2 585.0 C996.5 573.2 996.3 558.1 996.2 545.0 C996.1 531.9 995.7 519.4 996.4 506.6Z" fill="url(#dout)" stroke="#5f86c8" stroke-width="1.6"/>
    <g clip-path="url(#cdice)">
      <path d="M1003.0 470.0 C1003.8 458.7 1003.5 457.2 1008.0 452.0 C1012.5 446.8 1000.8 443.7 1030.0 439.0 C1059.2 434.3 1154.7 425.8 1183.0 424.0 C1211.3 422.2 1186.8 420.3 1200.0 428.0 C1213.2 435.7 1244.0 457.0 1262.0 470.0 C1280.0 483.0 1299.5 497.7 1308.0 506.0 C1316.5 514.3 1316.0 519.0 1313.0 520.0 C1310.0 521.0 1308.8 513.3 1290.0 512.0 C1271.2 510.7 1233.3 510.3 1200.0 512.0 C1166.7 513.7 1114.0 518.3 1090.0 522.0 C1066.0 525.7 1064.3 527.7 1056.0 534.0 C1047.7 540.3 1046.0 555.7 1040.0 560.0 C1034.0 564.3 1026.2 566.7 1020.0 560.0 C1013.8 553.3 1005.8 535.0 1003.0 520.0 C1000.2 505.0 1002.2 481.3 1003.0 470.0Z" fill="#80e0ff" filter="url(#db3)"/>
      <path d="M1048.0 560.0 C1049.9 547.6 1053.6 538.5 1058.0 534.0 C1062.4 529.5 1069.4 523.7 1086.0 521.0 C1102.6 518.3 1175.5 512.8 1200.0 511.0 C1224.5 509.2 1283.2 504.7 1296.0 506.0 C1308.8 507.3 1308.4 515.7 1310.0 522.0 C1311.6 528.3 1311.6 548.0 1310.0 560.0 C1308.4 572.0 1299.2 610.1 1296.0 625.0 C1292.8 639.9 1285.8 678.3 1283.0 688.0 C1280.2 697.7 1275.2 704.5 1272.0 708.0 C1268.8 711.5 1266.7 715.1 1256.0 718.0 C1245.3 720.9 1199.8 729.3 1180.0 733.0 C1160.2 736.7 1099.8 748.6 1086.0 750.0 C1072.2 751.4 1066.8 747.6 1062.0 745.0 C1057.2 742.4 1047.8 733.2 1045.0 728.0 C1042.2 722.8 1038.3 710.3 1038.0 700.0 C1037.7 689.7 1040.8 656.3 1042.0 640.0 C1043.2 623.7 1046.1 572.4 1048.0 560.0Z" fill="url(#dfront)" filter="url(#db6)"/>
      <path d="M1048.0 560.0 C1049.9 547.6 1053.6 538.5 1058.0 534.0 C1062.4 529.5 1069.4 523.7 1086.0 521.0 C1102.6 518.3 1175.5 512.8 1200.0 511.0 C1224.5 509.2 1283.2 504.7 1296.0 506.0 C1308.8 507.3 1308.4 515.7 1310.0 522.0 C1311.6 528.3 1311.6 548.0 1310.0 560.0 C1308.4 572.0 1299.2 610.1 1296.0 625.0 C1292.8 639.9 1285.8 678.3 1283.0 688.0 C1280.2 697.7 1275.2 704.5 1272.0 708.0 C1268.8 711.5 1266.7 715.1 1256.0 718.0 C1245.3 720.9 1199.8 729.3 1180.0 733.0 C1160.2 736.7 1099.8 748.6 1086.0 750.0 C1072.2 751.4 1066.8 747.6 1062.0 745.0 C1057.2 742.4 1047.8 733.2 1045.0 728.0 C1042.2 722.8 1038.3 710.3 1038.0 700.0 C1037.7 689.7 1040.8 656.3 1042.0 640.0 C1043.2 623.7 1046.1 572.4 1048.0 560.0Z" fill="url(#dfront)" filter="url(#db3)" opacity="0.8"/>
      <path d="M998.0 520.0 C998.9 510.7 1001.6 500.0 1004.0 500.0 C1006.4 500.0 1012.5 512.0 1016.0 520.0 C1019.5 528.0 1026.8 544.0 1030.0 560.0 C1033.2 576.0 1039.2 621.3 1040.0 640.0 C1040.8 658.7 1037.3 692.8 1036.0 700.0 C1034.7 707.2 1033.2 700.7 1030.0 694.0 C1026.8 687.3 1015.9 660.9 1012.0 650.0 C1008.1 639.1 1002.9 622.7 1001.0 612.0 C999.1 601.3 997.9 582.3 997.5 570.0 C997.1 557.7 997.1 529.3 998.0 520.0Z" fill="url(#dleft)" filter="url(#db3)"/>
      <path d="M1036 560 L1046 640 L1042 705" stroke="#79cfff" stroke-width="9" fill="none" filter="url(#db3)" opacity="0.9"/>
      <path d="M1003 500 L1020 560 L1032 640 L1030 690" stroke="#5a9fe8" stroke-width="5" fill="none" filter="url(#db3)" opacity="0.6"/>
      <path d="M1048.3 447.8 C1046.9 442.3 1056.3 437.6 1067.4 435.6 C1078.5 433.6 1171.2 424.6 1181.9 424.2 C1192.6 423.8 1189.7 425.6 1195.7 430.3 C1201.7 435.0 1250.1 475.4 1254.4 480.6 C1258.7 485.8 1249.1 491.8 1247.6 492.9 C1246.1 494.0 1248.0 493.0 1236.9 494.4 C1225.8 495.8 1127.4 509.0 1114.7 509.6 C1102.0 510.2 1089.7 507.1 1084.2 502.0 C1078.7 496.9 1049.7 453.3 1048.3 447.8Z" fill="#62b0d4"/>
      <path d="M1048.3 447.8 L1084.2 502 L1114.7 509.6 L1111.7 494.4 L1090.3 488.3 L1058.3 445.5Z" fill="url(#dflank)"/>
      <path d="M1236.9 494.4 L1247.6 492.9 L1254.4 480.6 L1243 473 L1235.3 484.5Z" fill="#86e8ff"/>
      <path d="M1058.3 445.5 C1056.9 442.1 1061.6 438.8 1070.0 437.5 C1078.4 436.2 1175.7 426.4 1184.0 426.0 C1192.3 425.6 1190.1 427.9 1194.0 431.0 C1197.9 434.1 1240.2 469.4 1243.0 473.0 C1245.8 476.6 1244.1 483.1 1235.3 484.5 C1226.5 485.9 1121.4 494.1 1111.7 494.4 C1102.0 494.7 1093.9 491.6 1090.3 488.3 C1086.7 485.0 1059.7 448.9 1058.3 445.5Z" fill="#83e2ff"/>
      <path d="M1048.3 447.8 L1067.4 435.6 L1181.9 424.2" stroke="#9af0ff" stroke-width="1.4" fill="none" opacity="0.7"/>
      <path d="M1105.6 609.4 L1122.4 592.6 L1143.8 584.4 L1264.3 567.6 L1284.2 586.5 L1278 598.7 L1261.3 690.3 L1238.4 711.7 L1122.4 733.8 L1098 717.8 L1102.5 630.8Z" fill="#5ba6ea" opacity="0.85"/>
      <path d="M1105.6 609.4 L1122.4 592.6 L1143.8 584.4 L1264.3 567.6 L1284.2 586.5 L1278 598.7 L1261.3 690.3 L1238.4 711.7 L1122.4 733.8 L1098 717.8 L1102.5 630.8Z" fill="none" stroke="#72c4fc" stroke-width="0.9" opacity="0.8"/>
      <path d="M1111.5 611.5 L1125.5 597.5 L1145 590 L1262.5 573.5 L1277.5 587.5 L1272.5 599 L1256 687.5 L1235.5 706.5 L1124 727.5 L1104 714.5 L1108 632Z" fill="url(#dpanel)"/>
      <path d="M1114 497.4 L1142.6 494.7" stroke="#ffffff" stroke-width="2.6" stroke-linecap="round" filter="url(#db05)"/>
      <path d="M1088.8 534.6 L1104 532" stroke="#ffffff" stroke-width="2.8" stroke-linecap="round" filter="url(#db05)"/><path d="M1088.8 534.6 L1112 530.8 L1136 527.6" stroke="#d8fbff" stroke-width="2" stroke-linecap="round" filter="url(#db1)" opacity="0.8"/>
      <path d="M1143.8 584.6 L1180 579 L1214 574 L1264 567.8" stroke="#9fe6ff" stroke-width="1.6" stroke-linecap="round" filter="url(#db1)" opacity="0.85"/>
    </g>
    <!-- text strokes -->
    <g fill="none" stroke="#6b67f3" stroke-width="2.5" stroke-linecap="round" stroke-linejoin="round">
      <path d="M1120 473 L1097.5 450 L1146.5 469 L1127.3 446.6"/>
      <ellipse cx="1172.8" cy="457" rx="18" ry="6.6" transform="rotate(6 1172.8 457)"/>
      <path d="M1173 621.6 Q1210 616 1239 607.2"/>
      <path d="M1204.8 615.5 Q1190 634 1176.8 646.6"/>
      <path d="M1204.8 615.5 Q1217 626 1230.6 630.2"/>
      <ellipse cx="1220.4" cy="647" rx="4.2" ry="2.8" stroke-width="1.8"/>
      <path d="M1174.5 657.5 L1204 651.2"/>
      <path d="M1204.8 672 Q1208 664 1203 662.4 Q1197 662 1188 670.5 Q1178 677 1170 674.6 Q1165 671.6 1170.5 667.4"/>
      <path d="M1195.6 693.4 Q1199.6 686 1194.6 684.4 Q1189 684 1182 691.9 Q1174 698.6 1167.4 696.6 Q1162.4 693 1166.7 688.8"/>
    </g>
    <g fill="none" stroke="#6d6cf2" stroke-width="1" stroke-linecap="round" opacity="0.9">
      <path d="M1006 561 L1013.5 575 M1008 582 L1012 590 M1007 577 L1010 600 M1010 596 L1014 612 M1012 575 L1016 578"/>
    </g>
    <!-- gizmo -->
    <path d="M1135.4 574.5 L1067.4 583.9" stroke="#d63a30" stroke-width="1.6"/>
    <path d="M1135.4 574.5 L1141 512" stroke="#8cf533" stroke-width="1.8"/>
    <path d="M1135.4 574.5 L1163 613.5" stroke="#2c5cf0" stroke-width="1.6"/>
    <path d="M1117 559.3 L1136.1 557.7 L1135.4 574.5 L1116.3 575.3Z" fill="#4a7fd6" fill-opacity="0.75" stroke="#2a46f0" stroke-width="1.1"/>
    <path d="M1136.1 557.7 L1144.5 567 L1143.8 584.4 L1135.4 574.5Z" fill="#7a7f9a" fill-opacity="0.6" stroke="#d03232" stroke-width="1.1"/>
    <path d="M1116.3 575.3 L1135.4 574.5 L1143.8 584.4 L1123 588.3Z" fill="#4aa8a0" fill-opacity="0.7" stroke="#62e030" stroke-width="1.1"/>
    <path d="M1142.2 494.4 L1133.6 512.2 Q1141 515.4 1148.2 512.8Z" fill="#84f52c"/>
    <path d="M1142.2 494.4 L1133.6 512.2 Q1136 513.6 1138.4 514Z" fill="#4f9a18"/>
    <path d="M1046.8 586.7 L1065.9 577.6 Q1069.6 584 1067.4 590.6Z" fill="#f02a1c"/>
    <path d="M1046.8 586.7 L1067.4 590.6 Q1068 588.6 1068.2 586.6Z" fill="#8a1810"/>
    <path d="M1173.6 631 L1158 620.6 Q1158.6 612.4 1167 611.8 Q1173.4 613.4 1172.6 621Z" fill="#1448f0"/>
    <path d="M1173.6 631 L1158 620.6 Q1158 618 1159 616.4Z" fill="#0a2a9a"/>
    </svg>
<div style="left:283px;top:128px;width:38px;height:171px;background:#171e2d;border-radius:3px;"></div>
<div style="left:293.6px;top:135.3px;width:16.2px;height:1px;background:#5a6070;"></div>
<div style="left:293.6px;top:138px;width:16.2px;height:1px;background:#5a6070;"></div>
<div style="left:286px;top:146px;width:32px;height:4px;background:#585858;border-radius:3px 3px 0 0;"></div>
<div style="left:286px;top:146.3px;width:32px;height:19.7px;background:#585858;"></div>
<svg style="left:294px;top:148.15px;" width="16" height="16" viewBox="0 0 16 16"><path d="M5.4 15 L3 10 L1 6.6 C0.4 5.4 1.8 4.8 2.6 5.8 L4.6 8.6 L4 2.4 C3.9 1.2 5.5 1 5.7 2.2 L6.6 7 L7 1.2 C7.1 0 8.7 0 8.7 1.2 L8.8 7 L10.2 2 C10.5 0.9 12 1.3 11.8 2.4 L10.8 7.8 L12.8 4.8 C13.4 3.8 14.8 4.6 14.2 5.7 L11.6 11.6 L10.6 15Z" fill="#d4d4d4"/></svg>
<div style="left:286px;top:167px;width:32px;height:20.2px;background:#46607c;"></div>
<svg style="left:294px;top:169.1px;" width="16" height="16" viewBox="0 0 16 16"><path d="M8 1.2 V14.8 M1.2 8 H14.8" stroke="#e8e8e8" stroke-width="1.2" stroke-dasharray="4.6 4.4 4.6 0"/><path d="M5.8 3.4 L8 1 L10.2 3.4 M5.8 12.6 L8 15 L10.2 12.6 M3.4 5.8 L1 8 L3.4 10.2 M12.6 5.8 L15 8 L12.6 10.2" fill="none" stroke="#e8e8e8" stroke-width="1.2"/></svg>
<div style="left:286px;top:188.2px;width:32px;height:19.8px;background:#585858;"></div>
<svg style="left:294px;top:190.1px;" width="16" height="16" viewBox="0 0 16 16"><path d="M6.4 1.6 A6.6 6.6 0 0 0 3.4 12.8 M9.6 14.4 A6.6 6.6 0 0 0 12.6 3.2" fill="none" stroke="#c4c4c4" stroke-width="1.2"/><path d="M0.8 13.2 H4.6 V9.4 M15.2 2.8 H11.4 V6.6" fill="none" stroke="#c4c4c4" stroke-width="1.2"/></svg>
<div style="left:286px;top:209px;width:32px;height:19.6px;background:#585858;"></div>
<svg style="left:294px;top:210.8px;" width="16" height="16" viewBox="0 0 16 16"><rect x="1.8" y="1.8" width="12.4" height="12.4" fill="none" stroke="#c4c4c4" stroke-width="1.1"/><rect x="1.8" y="9.4" width="4.8" height="4.8" fill="none" stroke="#c4c4c4" stroke-width="1"/><path d="M7 9 L11.6 4.4 M8 4.2 H11.8 V8" fill="none" stroke="#c4c4c4" stroke-width="1.1"/></svg>
<div style="left:286px;top:229.8px;width:32px;height:19.6px;background:#585858;"></div>
<svg style="left:294px;top:231.6px;" width="16" height="16" viewBox="0 0 16 16"><path d="M5.4 2.4 H10.6 M5.4 13.6 H10.6 M2.4 5.4 V10.6 M13.6 5.4 V10.6" fill="none" stroke="#c8c8c8" stroke-width="1.1"/><rect x="1.1" y="1.1" width="2.7" height="2.7" fill="#d0d0d0"/><rect x="12.2" y="1.1" width="2.7" height="2.7" fill="#d0d0d0"/><rect x="1.1" y="12.2" width="2.7" height="2.7" fill="#d0d0d0"/><rect x="12.2" y="12.2" width="2.7" height="2.7" fill="#d0d0d0"/></svg>
<div style="left:286px;top:250.6px;width:32px;height:20px;background:#585858;"></div>
<svg style="left:294px;top:252.6px;" width="16" height="16" viewBox="0 0 16 16"><circle cx="8" cy="8" r="6.6" fill="none" stroke="#c4c4c4" stroke-width="1.1" stroke-dasharray="8.4 2"/><path d="M8 3 V13 M3 8 H13" stroke="#c4c4c4" stroke-width="1.1"/><path d="M6.4 4.8 L8 2.8 L9.6 4.8 M6.4 11.2 L8 13.2 L9.6 11.2 M4.8 6.4 L2.8 8 L4.8 9.6 M11.2 6.4 L13.2 8 L11.2 9.6" fill="none" stroke="#c4c4c4" stroke-width="1"/><path d="M0 16 V13 L3 16Z M16 0 V3 L13 0Z" fill="#c4c4c4"/></svg>
<div style="left:286px;top:266px;width:32px;height:4.6px;background:#585858;border-radius:0 0 3px 3px;"></div>
<div style="left:286px;top:275.5px;width:32px;height:19.8px;background:#585858;border-radius:3px;"></div>
<svg style="left:294px;top:277.4px;" width="16" height="16" viewBox="0 0 16 16"><path d="M3 12 L8 3.4 L13 10" fill="none" stroke="#c4c4c4" stroke-width="1.1"/><rect x="6.4" y="1.6" width="3.2" height="3.2" fill="#585858" stroke="#c4c4c4" stroke-width="1"/><rect x="1.4" y="10.6" width="3.2" height="3.2" fill="#585858" stroke="#c4c4c4" stroke-width="1"/><rect x="11.4" y="8.6" width="3.2" height="3.2" fill="#585858" stroke="#c4c4c4" stroke-width="1"/></svg>
<div style="left:286px;top:166.4px;width:32px;height:0.8px;background:#1d2433;"></div>
<div style="left:286px;top:187.4px;width:32px;height:0.8px;background:#1d2433;"></div>
<div style="left:286px;top:208.2px;width:32px;height:0.8px;background:#1d2433;"></div>
<div style="left:286px;top:229px;width:32px;height:0.8px;background:#1d2433;"></div>
<div style="left:286px;top:249.8px;width:32px;height:0.8px;background:#1d2433;"></div>
<div style="left:1665px;top:134px;width:16px;height:1px;background:#56585f;"></div>
<div style="left:1665px;top:137px;width:16px;height:1px;background:#56585f;"></div>
<svg style="left:1660px;top:130px;" width="110" height="110" viewBox="0 0 110 110"><defs>
    <linearGradient id="gcone" x1="0" x2="1"><stop offset="0" stop-color="#8ee066"/><stop offset="1" stop-color="#9ee67a"/></linearGradient>
    <linearGradient id="rcone" x1="0" y1="0" x2="0" y2="1"><stop offset="0" stop-color="#e26c62"/><stop offset="1" stop-color="#d6584e"/></linearGradient>
    <linearGradient id="wcone" x1="0" y1="0" x2="0" y2="1"><stop offset="0" stop-color="#f4f4f6"/><stop offset="1" stop-color="#a8acb8"/></linearGradient>
    </defs>
    <path d="M48 42 C48 38 58 38 58 42 L56 48 H50Z" fill="#c4c8d2"/>
    <path d="M49.9 19.4 H64.4 L57 39.7Z" fill="url(#gcone)"/>
    <path d="M28.4 44.2 V57 L48 49Z" fill="url(#rcone)"/>
    <path d="M84 39 V50.8 L65.4 46.4Z" fill="url(#wcone)"/>
    <path d="M51 45 L57 42.4 L65 44.6 V57.4 L58.6 60 L51 57.6Z" fill="#eef0f6"/>
    <path d="M51 45 L58.6 47.4 V60 L51 57.6Z" fill="#d8dbe6"/>
    <path d="M53 60 L58 60 L62 74 L54 72Z" fill="#d6d8e0"/>
    <path d="M58 52 L72 63 L60 72Z" fill="#4a64b4"/>
    <circle cx="65.4" cy="64.2" r="8.6" fill="#5a90fa"/>
    </svg>
<div style="top:131.84px;font-size:12px;line-height:16px;letter-spacing:0.000px;color:#f0f2f8;white-space:nowrap;font-weight:bold;left:1712px;">y</div>
<div style="top:172.84px;font-size:12px;line-height:16px;letter-spacing:0.000px;color:#f0f2f8;white-space:nowrap;font-weight:bold;left:1677.3px;">x</div>
<div style="top:197.84px;font-size:12px;line-height:16px;letter-spacing:0.000px;color:#f0f2f8;white-space:nowrap;font-weight:bold;left:1726px;">z</div>
<svg style="left:1745.6px;top:142px;" width="8" height="9.6" viewBox="0 0 8 9.6"><rect x="0.4" y="4" width="6.6" height="5" fill="#dfe5f5"/><path d="M1.8 4 V2.6 C1.8 0.4 5.6 0.4 5.6 2.4" fill="none" stroke="#dfe5f5" stroke-width="1.1"/></svg>
<svg style="left:1692px;top:223px;" width="11" height="10" viewBox="0 0 11 10"><path d="M10 0.8 L1 5 L10 9.2 M1 5 H10" fill="none" stroke="#c3cbe0" stroke-width="1"/></svg>
<div style="top:220.84px;font-size:12px;line-height:16px;letter-spacing:0.130px;color:#bcc5dc;white-space:nowrap;left:1705.4px;">Persp</div>
<div style="left:1567px;top:637px;width:203px;height:238px;background:#161b27;border-radius:3px;"></div>
<div style="left:1572px;top:643px;width:16px;height:1px;background:#454b59;"></div>
<div style="left:1572px;top:647px;width:16px;height:1px;background:#454b59;"></div>
<div style="top:637.84px;font-size:12px;line-height:16px;letter-spacing:0.279px;color:#8f9094;white-space:nowrap;left:1593.3px;">AI Navigation</div>
<svg style="left:1575.4px;top:658.4px;" width="8.6" height="7.6" viewBox="0 0 8.6 7.6"><path d="M0.3 0.3 H8.3 L4.3 7.2Z" fill="#6d6f76"/></svg>
<div style="top:654.84px;font-size:12px;line-height:16px;letter-spacing:0.268px;color:#c8c8c8;white-space:nowrap;left:1589.3px;">Surfaces</div>
<div style="top:673.84px;font-size:12px;line-height:16px;letter-spacing:0.286px;color:#c8c8c8;white-space:nowrap;left:1589.3px;">Show Only Selected</div>
<div style="left:1750.5px;top:675.3px;width:13.2px;height:13.2px;background:#2a2c31;border-radius:2px;"></div>
<div style="top:689.84px;font-size:12px;line-height:16px;letter-spacing:0.322px;color:#c8c8c8;white-space:nowrap;left:1589.3px;">Show NavMesh</div>
<div style="left:1750.5px;top:691.8px;width:13.2px;height:13.2px;background:#2a2c31;border-radius:2px;"></div>
<svg style="left:1750.5px;top:691.8px;" width="13.2" height="13.2" viewBox="0 0 13.2 13.2"><path d="M2.8 7 L5.4 9.6 L10.6 3.8" fill="none" stroke="#e8e8e8" stroke-width="1.6"/></svg>
<div style="top:705.84px;font-size:12px;line-height:16px;letter-spacing:0.375px;color:#c8c8c8;white-space:nowrap;left:1589.3px;">Show HeightMesh</div>
<div style="left:1750.5px;top:707.4px;width:13.2px;height:13.2px;background:#2a2c31;border-radius:2px;"></div>
<svg style="left:1575.4px;top:731.7px;" width="8.6" height="7.6" viewBox="0 0 8.6 7.6"><path d="M0.3 0.3 H8.3 L4.3 7.2Z" fill="#6d6f76"/></svg>
<div style="top:727.84px;font-size:12px;line-height:16px;letter-spacing:0.340px;color:#c8c8c8;white-space:nowrap;left:1589.3px;">Agents</div>
<div style="top:746.84px;font-size:12px;line-height:16px;letter-spacing:0.281px;color:#c8c8c8;white-space:nowrap;left:1589.3px;">Show Path Polygons</div>
<div style="left:1750.5px;top:748.4px;width:13.2px;height:13.2px;background:#2a2c31;border-radius:2px;"></div>
<svg style="left:1750.5px;top:748.4px;" width="13.2" height="13.2" viewBox="0 0 13.2 13.2"><path d="M2.8 7 L5.4 9.6 L10.6 3.8" fill="none" stroke="#e8e8e8" stroke-width="1.6"/></svg>
<div style="top:762.84px;font-size:12px;line-height:16px;letter-spacing:0.273px;color:#c8c8c8;white-space:nowrap;left:1589.3px;">Show Path Query Nodes</div>
<div style="left:1750.5px;top:764.5px;width:13.2px;height:13.2px;background:#2a2c31;border-radius:2px;"></div>
<div style="top:778.84px;font-size:12px;line-height:16px;letter-spacing:0.339px;color:#c8c8c8;white-space:nowrap;left:1589.3px;">Show Neighbours</div>
<div style="left:1750.5px;top:780.5px;width:13.2px;height:13.2px;background:#2a2c31;border-radius:2px;"></div>
<div style="top:794.84px;font-size:12px;line-height:16px;letter-spacing:0.226px;color:#c8c8c8;white-space:nowrap;left:1589.3px;">Show Walls</div>
<div style="left:1750.5px;top:796.8px;width:13.2px;height:13.2px;background:#2a2c31;border-radius:2px;"></div>
<div style="top:810.84px;font-size:12px;line-height:16px;letter-spacing:0.378px;color:#c8c8c8;white-space:nowrap;left:1589.3px;">Show Avoidance</div>
<div style="left:1750.5px;top:812.5px;width:13.2px;height:13.2px;background:#2a2c31;border-radius:2px;"></div>
<svg style="left:1575.4px;top:836.5px;" width="8.6" height="7.6" viewBox="0 0 8.6 7.6"><path d="M0.3 0.3 H8.3 L4.3 7.2Z" fill="#6d6f76"/></svg>
<div style="top:832.84px;font-size:12px;line-height:16px;letter-spacing:0.283px;color:#c8c8c8;white-space:nowrap;left:1589.3px;">Obstacles</div>
<div style="top:851.84px;font-size:12px;line-height:16px;letter-spacing:0.242px;color:#c8c8c8;white-space:nowrap;left:1589.3px;">Show Carve Hull</div>
<div style="left:1750.5px;top:853.4px;width:13.2px;height:13.2px;background:#2a2c31;border-radius:2px;"></div>
<div style="left:1774px;top:81px;width:518px;height:1288px;background:#383838;"></div>
<div style="left:1774px;top:81px;width:518px;height:19px;background:#282828;"></div>
<div style="left:1775px;top:81px;width:92px;height:19px;background:#3c3c3c;border-radius:3px 3px 0 0;"></div>
<svg style="left:1783px;top:86px;" width="10" height="10" viewBox="0 0 10 10"><circle cx="5" cy="5" r="4.9" fill="#c8c8c8"/><rect x="4.2" y="4.2" width="1.6" height="3.8" fill="#3c3c3c"/><rect x="4.2" y="1.9" width="1.6" height="1.5" fill="#3c3c3c"/></svg>
<div style="top:83.84px;font-size:12px;line-height:16px;letter-spacing:0.293px;color:#d2d2d2;white-space:nowrap;left:1798px;">Inspector</div>
<div style="top:83.84px;font-size:12px;line-height:16px;letter-spacing:-0.003px;color:#c4c4c4;white-space:nowrap;left:1875.4px;">VRChat SDK</div>
<svg style="left:2256px;top:84px;" width="12" height="12" viewBox="0 0 12 12"><rect x="1.6" y="6.2" width="7.6" height="4.6" fill="none" stroke="#c4c4c4" stroke-width="1.2" rx="0.6"/><path d="M3 6 V3.6 C3 1 8 1 8 3.4" fill="none" stroke="#c4c4c4" stroke-width="1.2"/></svg>
<svg style="left:2277px;top:84px;" width="4" height="13" viewBox="0 0 4 13"><rect x="0.8" y="0.8" width="2.2" height="2.2" fill="#c4c4c4"/><rect x="0.8" y="5" width="2.2" height="2.2" fill="#c4c4c4"/><rect x="0.8" y="9.2" width="2.2" height="2.2" fill="#c4c4c4"/></svg>
<div style="left:1774px;top:100px;width:518px;height:110px;background:#3c3c3c;"></div>
<svg style="left:1781px;top:110px;" width="21" height="22" viewBox="0 0 21 22"><path d="M10.5 1 L19.6 5.4 L10.5 9.8 L1.4 5.4Z" fill="#8fd6f7"/><path d="M1.4 7 L9.7 11 V21 L1.4 16.8Z" fill="#d6d6d6"/><path d="M19.6 7 L11.3 11 V21 L19.6 16.8Z" fill="#57bdf0"/><path d="M5.2 3.4 L14.4 7.9 V12.2" fill="none" stroke="#3c3c3c" stroke-width="1.7"/><path d="M1.4 12 L5.6 14 V18.8 L1.4 16.8Z" fill="#8e8e8e"/></svg>
<svg style="left:1800.5px;top:131.5px;" width="7" height="4.2" viewBox="0 0 7 4.2"><path d="M0.3 0.3 H6.7 L3.5 4Z" fill="#c4c4c4"/></svg>
<div style="left:1821px;top:111px;width:14px;height:14px;background:#2a2a2a;border-radius:3px;border:1px solid #212121;border-top-color:#161616;"></div>
<svg style="left:1821px;top:111px;" width="14" height="14" viewBox="0 0 14 14"><path d="M3.2 7.4 L5.8 10 L11 4.2" fill="none" stroke="#e6e6e6" stroke-width="1.7"/></svg>
<div style="left:1841px;top:109px;width:371px;height:18px;background:#2a2a2a;border-radius:3px;border:1px solid #212121;border-top-color:#131313;border-bottom-color:#2f2f2f;"></div>
<div style="top:110.84px;font-size:12px;line-height:16px;letter-spacing:0.247px;color:#e0e0e0;white-space:nowrap;font-weight:bold;left:1844.2px;">dice</div>
<div style="left:2215px;top:111px;width:14px;height:14px;background:#2a2a2a;border-radius:3px;border:1px solid #212121;border-top-color:#161616;"></div>
<div style="top:110.84px;font-size:12px;line-height:16px;letter-spacing:0.331px;color:#c4c4c4;white-space:nowrap;left:2233px;">Static</div>
<svg style="left:2278px;top:116px;" width="8.5" height="5.2" viewBox="0 0 8.5 5.2"><path d="M0.3 0.3 H8.2 L4.25 5Z" fill="#c4c4c4"/></svg>
<div style="top:134.84px;font-size:12px;line-height:16px;letter-spacing:0.551px;color:#c4c4c4;white-space:nowrap;left:1814.7px;">Tag</div>
<div style="left:1840px;top:133px;width:205px;height:18px;background:#515151;border-radius:3px;border:1px solid #303030;border-bottom-color:#242424;"></div>
<div style="top:133.84px;font-size:12px;line-height:16px;letter-spacing:0.370px;color:#e4e4e4;white-space:nowrap;left:1844.6px;">Untagged</div>
<svg style="left:2029.5px;top:139.4px;" width="8.5" height="5.2" viewBox="0 0 8.5 5.2"><path d="M0.3 0.3 H8.2 L4.25 5Z" fill="#d0d0d0"/></svg>
<div style="top:134.84px;font-size:12px;line-height:16px;letter-spacing:0.397px;color:#c4c4c4;white-space:nowrap;left:2057px;">Layer</div>
<div style="left:2092.5px;top:133px;width:195.5px;height:18px;background:#515151;border-radius:3px;border:1px solid #303030;border-bottom-color:#242424;"></div>
<div style="top:133.84px;font-size:12px;line-height:16px;letter-spacing:0.426px;color:#e4e4e4;white-space:nowrap;left:2097.1px;">Default</div>
<svg style="left:2272.5px;top:139.4px;" width="8.5" height="5.2" viewBox="0 0 8.5 5.2"><path d="M0.3 0.3 H8.2 L4.25 5Z" fill="#d0d0d0"/></svg>
<div style="top:166.84px;font-size:12px;line-height:16px;letter-spacing:0.274px;color:#c4c4c4;white-space:nowrap;left:1799px;">Prefab</div>
<div style="left:1841px;top:165px;width:447px;height:18px;background:#2a2a2a;border-radius:3px;border:1px solid #212121;border-top-color:#131313;border-bottom-color:#2f2f2f;"></div>
<svg style="left:1843.5px;top:169.5px;" width="10.5" height="11" viewBox="0 0 10.5 11"><path d="M5.2 0.6 L9.9 2.9 L5.2 5.2 L0.5 2.9Z" fill="#8fd6f7"/><path d="M0.5 3.7 L4.8 5.8 V10.6 L0.5 8.5Z" fill="#d6d6d6"/><path d="M9.9 3.7 L5.6 5.8 V10.6 L9.9 8.5Z" fill="#57bdf0"/><path d="M2.6 1.9 L7.2 4.2 V6.2" fill="none" stroke="#2a2a2a" stroke-width="0.9"/></svg>
<div style="top:166.84px;font-size:12px;line-height:16px;letter-spacing:0.372px;color:#d2d2d2;white-space:nowrap;left:1856.3px;">dice</div>
<div style="left:2270px;top:166px;width:17px;height:16px;background:#343434;border-radius:0 2px 2px 0;"></div>
<svg style="left:2273px;top:168.5px;" width="11" height="11" viewBox="0 0 11 11"><circle cx="5.5" cy="5.5" r="4.6" fill="none" stroke="#c4c4c4" stroke-width="1.1"/><circle cx="5.5" cy="5.5" r="1.7" fill="#c4c4c4"/></svg>
<div style="left:1840px;top:187px;width:155px;height:18px;background:#515151;border-radius:3px;border:1px solid #303030;border-bottom-color:#242424;"></div>
<div style="top:187.84px;font-size:12px;line-height:16px;letter-spacing:0.221px;color:#e4e4e4;white-space:nowrap;left:1844.6px;">Overrides</div>
<svg style="left:1979.5px;top:193.4px;" width="8.5" height="5.2" viewBox="0 0 8.5 5.2"><path d="M0.3 0.3 H8.2 L4.25 5Z" fill="#d0d0d0"/></svg>
<div style="left:2027px;top:187px;width:131px;height:18px;background:#585858;border-radius:3px;border:1px solid #303030;border-bottom-color:#242424;"></div>
<div style="top:187.84px;font-size:12px;line-height:16px;letter-spacing:0.441px;color:#eeeeee;white-space:nowrap;left:2074.5px;">Select</div>
<div style="left:2161px;top:187px;width:126px;height:18px;background:#585858;border-radius:3px;border:1px solid #303030;border-bottom-color:#242424;"></div>
<div style="top:187.84px;font-size:12px;line-height:16px;letter-spacing:0.161px;color:#eeeeee;white-space:nowrap;left:2209px;">Open</div>
<div style="left:1774px;top:210px;width:518px;height:1px;background:#1a1a1a;"></div>
<div style="left:1774px;top:211px;width:518px;height:20px;background:#3e3e3e;"></div>
<div style="left:1774px;top:231px;width:518px;height:1px;background:#353535;"></div>
<svg style="left:1780px;top:217.5px;" width="9.5" height="8.5" viewBox="0 0 9.5 8.5"><path d="M0.4 0.4 H9.1 L4.75 8.2Z" fill="#747474"/></svg>
<svg style="left:1794px;top:213px;" width="16" height="16" viewBox="0 0 16 16"><path d="M8 3.2 V7.4" stroke="#a6ee4c" stroke-width="2.6" stroke-linecap="round"/><path d="M9.8 9.6 L13.2 11.6" stroke="#f0683a" stroke-width="2.6" stroke-linecap="round"/><path d="M6.2 9.6 L2.8 11.6" stroke="#5ac3f5" stroke-width="2.6" stroke-linecap="round"/></svg>
<div style="top:213.84px;font-size:12px;line-height:16px;letter-spacing:0.258px;color:#dcdcdc;white-space:nowrap;font-weight:bold;left:1834.5px;">Transform</div>
<svg style="left:2233px;top:215.5px;" width="11" height="11" viewBox="0 0 11 11"><circle cx="5.5" cy="5.5" r="5.4" fill="#c4c4c4"/><path d="M3.7 4.3 C3.7 2.0 7.4 2.0 7.4 4.2 C7.4 5.6 5.6 5.5 5.6 7.0" fill="none" stroke="#3e3e3e" stroke-width="1.3"/><rect x="4.9" y="7.9" width="1.4" height="1.4" fill="#3e3e3e"/></svg>
<svg style="left:2253px;top:215.5px;" width="12" height="11" viewBox="0 0 12 11"><path d="M0.5 3 H6.4 M9 3 H11.5 M0.5 8 H2.8 M5.4 8 H11.5" stroke="#c4c4c4" stroke-width="1.2"/><path d="M7.6 0.6 V5.4 M4.1 5.6 V10.4" stroke="#c4c4c4" stroke-width="1.4"/></svg>
<svg style="left:2277px;top:215px;" width="4" height="13" viewBox="0 0 4 13"><rect x="0.6" y="0.4" width="2.2" height="2.2" fill="#c4c4c4"/><rect x="0.6" y="4.7" width="2.2" height="2.2" fill="#c4c4c4"/><rect x="0.6" y="9" width="2.2" height="2.2" fill="#c4c4c4"/></svg>
<div style="top:237.84px;font-size:12px;line-height:16px;letter-spacing:-0.042px;color:#d6d6d6;white-space:nowrap;font-weight:bold;left:1793.3px;">Position</div>
<div style="top:237.84px;font-size:12px;line-height:16px;letter-spacing:0.280px;color:#c4c4c4;white-space:nowrap;left:1988px;">X</div>
<div style="left:2002px;top:236px;width:82.5px;height:18px;background:#2a2a2a;border-radius:3px;border:1px solid #212121;border-top-color:#131313;border-bottom-color:#2f2f2f;"></div>
<div style="top:237.84px;font-size:12px;line-height:16px;letter-spacing:0.280px;color:#d2d2d2;white-space:nowrap;left:2005.2px;">0</div>
<div style="top:237.84px;font-size:12px;line-height:16px;letter-spacing:0.180px;color:#d2d2d2;white-space:nowrap;font-weight:bold;left:2090.5px;">Y</div>
<div style="left:2105px;top:236px;width:81.5px;height:18px;background:#2a2a2a;border-radius:3px;border:1px solid #212121;border-top-color:#131313;border-bottom-color:#2f2f2f;"></div>
<div style="top:237.84px;font-size:12px;line-height:16px;letter-spacing:0.180px;color:#e0e0e0;white-space:nowrap;font-weight:bold;left:2108.2px;">0.748</div>
<div style="top:237.84px;font-size:12px;line-height:16px;letter-spacing:0.280px;color:#c4c4c4;white-space:nowrap;left:2192px;">Z</div>
<div style="left:2206px;top:236px;width:82px;height:18px;background:#2a2a2a;border-radius:3px;border:1px solid #212121;border-top-color:#131313;border-bottom-color:#2f2f2f;"></div>
<div style="top:237.84px;font-size:12px;line-height:16px;letter-spacing:0.280px;color:#d2d2d2;white-space:nowrap;left:2209.2px;">0</div>
<div style="top:257.84px;font-size:12px;line-height:16px;letter-spacing:-0.020px;color:#d6d6d6;white-space:nowrap;font-weight:bold;left:1793.3px;">Rotation</div>
<div style="top:257.84px;font-size:12px;line-height:16px;letter-spacing:0.180px;color:#d2d2d2;white-space:nowrap;font-weight:bold;left:1988px;">X</div>
<div style="left:2002px;top:256px;width:82.5px;height:18px;background:#2a2a2a;border-radius:3px;border:1px solid #212121;border-top-color:#131313;border-bottom-color:#2f2f2f;"></div>
<div style="top:257.84px;font-size:12px;line-height:16px;letter-spacing:0.180px;color:#e0e0e0;white-space:nowrap;font-weight:bold;left:2005.2px;">0</div>
<div style="top:257.84px;font-size:12px;line-height:16px;letter-spacing:0.180px;color:#d2d2d2;white-space:nowrap;font-weight:bold;left:2090.5px;">Y</div>
<div style="left:2105px;top:256px;width:81.5px;height:18px;background:#2a2a2a;border-radius:3px;border:1px solid #212121;border-top-color:#131313;border-bottom-color:#2f2f2f;"></div>
<div style="top:257.84px;font-size:12px;line-height:16px;letter-spacing:0.180px;color:#e0e0e0;white-space:nowrap;font-weight:bold;left:2108.2px;">0</div>
<div style="top:257.84px;font-size:12px;line-height:16px;letter-spacing:0.180px;color:#d2d2d2;white-space:nowrap;font-weight:bold;left:2192px;">Z</div>
<div style="left:2206px;top:256px;width:82px;height:18px;background:#2a2a2a;border-radius:3px;border:1px solid #212121;border-top-color:#131313;border-bottom-color:#2f2f2f;"></div>
<div style="top:257.84px;font-size:12px;line-height:16px;letter-spacing:0.180px;color:#e0e0e0;white-space:nowrap;font-weight:bold;left:2209.2px;">0</div>
<div style="top:277.84px;font-size:12px;line-height:16px;letter-spacing:0.197px;color:#c4c4c4;white-space:nowrap;left:1793.3px;">Scale</div>
<div style="top:277.84px;font-size:12px;line-height:16px;letter-spacing:0.280px;color:#c4c4c4;white-space:nowrap;left:1988px;">X</div>
<div style="left:2002px;top:276px;width:82.5px;height:18px;background:#2a2a2a;border-radius:3px;border:1px solid #212121;border-top-color:#131313;border-bottom-color:#2f2f2f;"></div>
<div style="top:277.84px;font-size:12px;line-height:16px;letter-spacing:0.280px;color:#d2d2d2;white-space:nowrap;left:2005.2px;">1</div>
<div style="top:277.84px;font-size:12px;line-height:16px;letter-spacing:0.280px;color:#c4c4c4;white-space:nowrap;left:2090.5px;">Y</div>
<div style="left:2105px;top:276px;width:81.5px;height:18px;background:#2a2a2a;border-radius:3px;border:1px solid #212121;border-top-color:#131313;border-bottom-color:#2f2f2f;"></div>
<div style="top:277.84px;font-size:12px;line-height:16px;letter-spacing:0.280px;color:#d2d2d2;white-space:nowrap;left:2108.2px;">1</div>
<div style="top:277.84px;font-size:12px;line-height:16px;letter-spacing:0.280px;color:#c4c4c4;white-space:nowrap;left:2192px;">Z</div>
<div style="left:2206px;top:276px;width:82px;height:18px;background:#2a2a2a;border-radius:3px;border:1px solid #212121;border-top-color:#131313;border-bottom-color:#2f2f2f;"></div>
<div style="top:277.84px;font-size:12px;line-height:16px;letter-spacing:0.280px;color:#d2d2d2;white-space:nowrap;left:2209.2px;">1</div>
<svg style="left:1965px;top:279px;" width="14" height="12" viewBox="0 0 14 12"><path d="M4.6 3.2 H3.6 C0.2 3.2 0.2 8.8 3.6 8.8 H5.6 M8.4 3.2 H10.4 C13.8 3.2 13.8 8.8 10.4 8.8 H9.4" fill="none" stroke="#c4c4c4" stroke-width="1.2"/><path d="M1.6 0.8 L12 11.2" stroke="#c4c4c4" stroke-width="1.1"/></svg>
<div style="left:1774px;top:303px;width:518px;height:1px;background:#1a1a1a;"></div>
<div style="left:1774px;top:304px;width:518px;height:20px;background:#3e3e3e;"></div>
<div style="left:1774px;top:324px;width:518px;height:1px;background:#353535;"></div>
<svg style="left:1780px;top:310.5px;" width="9.5" height="8.5" viewBox="0 0 9.5 8.5"><path d="M0.4 0.4 H9.1 L4.75 8.2Z" fill="#747474"/></svg>
<svg style="left:1794px;top:306px;" width="16" height="16" viewBox="0 0 16 16"><path d="M7.4 1.4 L13.6 4.4 L7.4 7.4 L1.2 4.4Z" fill="#c8f56a"/><path d="M1.2 4.4 L7.4 7.4 V14.6 L1.2 11.4Z" fill="#a5ea4c"/><path d="M13.6 4.4 L7.4 7.4 V14.6 L13.6 11.4Z" fill="#8fdc3c"/><circle cx="11" cy="11.4" r="3.9" fill="#16c25e" stroke="#0d7a3a" stroke-width="0.6"/><path d="M8.8 11.4 H13.2 M11 9.2 V13.6" stroke="#0c7034" stroke-width="1.1"/></svg>
<div style="left:1814px;top:307px;width:14px;height:14px;background:#2a2a2a;border-radius:3px;border:1px solid #212121;border-top-color:#161616;"></div>
<svg style="left:1814px;top:307px;" width="14" height="14" viewBox="0 0 14 14"><path d="M3.2 7.4 L5.8 10 L11 4.2" fill="none" stroke="#e6e6e6" stroke-width="1.7"/></svg>
<div style="top:306.84px;font-size:12px;line-height:16px;letter-spacing:-0.098px;color:#dcdcdc;white-space:nowrap;font-weight:bold;left:1834.5px;">Box Collider</div>
<svg style="left:2233px;top:308.5px;" width="11" height="11" viewBox="0 0 11 11"><circle cx="5.5" cy="5.5" r="5.4" fill="#c4c4c4"/><path d="M3.7 4.3 C3.7 2.0 7.4 2.0 7.4 4.2 C7.4 5.6 5.6 5.5 5.6 7.0" fill="none" stroke="#3e3e3e" stroke-width="1.3"/><rect x="4.9" y="7.9" width="1.4" height="1.4" fill="#3e3e3e"/></svg>
<svg style="left:2253px;top:308.5px;" width="12" height="11" viewBox="0 0 12 11"><path d="M0.5 3 H6.4 M9 3 H11.5 M0.5 8 H2.8 M5.4 8 H11.5" stroke="#c4c4c4" stroke-width="1.2"/><path d="M7.6 0.6 V5.4 M4.1 5.6 V10.4" stroke="#c4c4c4" stroke-width="1.4"/></svg>
<svg style="left:2277px;top:308px;" width="4" height="13" viewBox="0 0 4 13"><rect x="0.6" y="0.4" width="2.2" height="2.2" fill="#c4c4c4"/><rect x="0.6" y="4.7" width="2.2" height="2.2" fill="#c4c4c4"/><rect x="0.6" y="9" width="2.2" height="2.2" fill="#c4c4c4"/></svg>
<div style="top:330.84px;font-size:12px;line-height:16px;letter-spacing:0.178px;color:#c4c4c4;white-space:nowrap;left:1793.3px;">Edit Collider</div>
<div style="left:1986px;top:331px;width:31.5px;height:21.5px;background:#383838;border-radius:3px;border:1px solid #1c1c1c;"></div>
<svg style="left:1994px;top:335px;" width="15" height="13" viewBox="0 0 15 13"><path d="M2.2 10 L7 2.8 L12.4 8.6" fill="none" stroke="#c4c4c4" stroke-width="1.1"/><rect x="5.6" y="1.2" width="3" height="3" fill="#383838" stroke="#c4c4c4" stroke-width="1"/><rect x="0.8" y="8.8" width="3" height="3" fill="#383838" stroke="#c4c4c4" stroke-width="1"/><rect x="11" y="7.2" width="3" height="3" fill="#383838" stroke="#c4c4c4" stroke-width="1"/></svg>
<div style="top:359.84px;font-size:12px;line-height:16px;letter-spacing:0.198px;color:#c4c4c4;white-space:nowrap;left:1793.3px;">Is Trigger</div>
<div style="left:1987px;top:360px;width:14px;height:14px;background:#2a2a2a;border-radius:3px;border:1px solid #212121;border-top-color:#161616;"></div>
<div style="top:379.84px;font-size:12px;line-height:16px;letter-spacing:0.331px;color:#c4c4c4;white-space:nowrap;left:1793.3px;">Provides Contacts</div>
<div style="left:1987px;top:380px;width:14px;height:14px;background:#2a2a2a;border-radius:3px;border:1px solid #212121;border-top-color:#161616;"></div>
<div style="top:399.84px;font-size:12px;line-height:16px;letter-spacing:0.353px;color:#c4c4c4;white-space:nowrap;left:1793.3px;">Material</div>
<div style="left:1987px;top:398px;width:301px;height:18px;background:#2a2a2a;border-radius:3px;border:1px solid #212121;border-top-color:#131313;border-bottom-color:#2f2f2f;"></div>
<div style="top:399.84px;font-size:12px;line-height:16px;letter-spacing:0.301px;color:#d2d2d2;white-space:nowrap;left:1990.2px;">None (Physic Material)</div>
<div style="left:2270px;top:399px;width:17px;height:16px;background:#343434;border-radius:0 2px 2px 0;"></div>
<svg style="left:2273px;top:401.5px;" width="11" height="11" viewBox="0 0 11 11"><circle cx="5.5" cy="5.5" r="4.6" fill="none" stroke="#c4c4c4" stroke-width="1.1"/><circle cx="5.5" cy="5.5" r="1.7" fill="#c4c4c4"/></svg>
<div style="top:419.84px;font-size:12px;line-height:16px;letter-spacing:0.330px;color:#c4c4c4;white-space:nowrap;left:1793.3px;">Center</div>
<div style="top:419.84px;font-size:12px;line-height:16px;letter-spacing:0.280px;color:#c4c4c4;white-space:nowrap;left:1988px;">X</div>
<div style="left:2002px;top:418px;width:82.5px;height:18px;background:#2a2a2a;border-radius:3px;border:1px solid #212121;border-top-color:#131313;border-bottom-color:#2f2f2f;"></div>
<div style="top:419.84px;font-size:12px;line-height:16px;letter-spacing:0.280px;color:#d2d2d2;white-space:nowrap;left:2005.2px;">0</div>
<div style="top:419.84px;font-size:12px;line-height:16px;letter-spacing:0.280px;color:#c4c4c4;white-space:nowrap;left:2090.5px;">Y</div>
<div style="left:2105px;top:418px;width:81.5px;height:18px;background:#2a2a2a;border-radius:3px;border:1px solid #212121;border-top-color:#131313;border-bottom-color:#2f2f2f;"></div>
<div style="top:419.84px;font-size:12px;line-height:16px;letter-spacing:0.280px;color:#d2d2d2;white-space:nowrap;left:2108.2px;">0</div>
<div style="top:419.84px;font-size:12px;line-height:16px;letter-spacing:0.280px;color:#c4c4c4;white-space:nowrap;left:2192px;">Z</div>
<div style="left:2206px;top:418px;width:82px;height:18px;background:#2a2a2a;border-radius:3px;border:1px solid #212121;border-top-color:#131313;border-bottom-color:#2f2f2f;"></div>
<div style="top:419.84px;font-size:12px;line-height:16px;letter-spacing:0.280px;color:#d2d2d2;white-space:nowrap;left:2209.2px;">0</div>
<div style="top:439.84px;font-size:12px;line-height:16px;letter-spacing:0.289px;color:#c4c4c4;white-space:nowrap;left:1793.3px;">Size</div>
<div style="top:439.84px;font-size:12px;line-height:16px;letter-spacing:0.280px;color:#c4c4c4;white-space:nowrap;left:1988px;">X</div>
<div style="left:2002px;top:438px;width:82.5px;height:18px;background:#2a2a2a;border-radius:3px;border:1px solid #212121;border-top-color:#131313;border-bottom-color:#2f2f2f;"></div>
<div style="top:439.84px;font-size:12px;line-height:16px;letter-spacing:0.280px;color:#d2d2d2;white-space:nowrap;left:2005.2px;">1</div>
<div style="top:439.84px;font-size:12px;line-height:16px;letter-spacing:0.280px;color:#c4c4c4;white-space:nowrap;left:2090.5px;">Y</div>
<div style="left:2105px;top:438px;width:81.5px;height:18px;background:#2a2a2a;border-radius:3px;border:1px solid #212121;border-top-color:#131313;border-bottom-color:#2f2f2f;"></div>
<div style="top:439.84px;font-size:12px;line-height:16px;letter-spacing:0.280px;color:#d2d2d2;white-space:nowrap;left:2108.2px;">1</div>
<div style="top:439.84px;font-size:12px;line-height:16px;letter-spacing:0.280px;color:#c4c4c4;white-space:nowrap;left:2192px;">Z</div>
<div style="left:2206px;top:438px;width:82px;height:18px;background:#2a2a2a;border-radius:3px;border:1px solid #212121;border-top-color:#131313;border-bottom-color:#2f2f2f;"></div>
<div style="top:439.84px;font-size:12px;line-height:16px;letter-spacing:0.280px;color:#d2d2d2;white-space:nowrap;left:2209.2px;">1</div>
<svg style="left:1781.9px;top:462.8px;" width="8" height="10" viewBox="0 0 8 10"><path d="M0.4 0.4 L7.6 5 L0.4 9.6Z" fill="#7e7e7e"/></svg>
<div style="top:459.84px;font-size:12px;line-height:16px;letter-spacing:0.242px;color:#c4c4c4;white-space:nowrap;left:1793.3px;">Layer Overrides</div>
<div style="left:1774px;top:483px;width:518px;height:1px;background:#1a1a1a;"></div>
<div style="left:1774px;top:484px;width:518px;height:20px;background:#3e3e3e;"></div>
<div style="left:1774px;top:504px;width:518px;height:1px;background:#353535;"></div>
<svg style="left:1780px;top:490.5px;" width="9.5" height="8.5" viewBox="0 0 9.5 8.5"><path d="M0.4 0.4 H9.1 L4.75 8.2Z" fill="#747474"/></svg>
<svg style="left:1794px;top:486px;" width="16" height="16" viewBox="0 0 16 16"><circle cx="8" cy="8" r="6.6" fill="#3e3e3e" stroke="#a6ee4c" stroke-width="0.9"/><path d="M8 1.4 A6.6 6.6 0 0 0 1.4 8 H8Z" fill="#a6ee4c"/><path d="M8 1.4 V14.6 M1.4 8 H14.6" stroke="#6f9e3a" stroke-width="0.5" opacity="0.6"/><circle cx="11.2" cy="10.8" r="4" fill="#16c25e" stroke="#0d7a3a" stroke-width="0.6"/><path d="M9 10.8 H13.4 M11.2 8.6 V13" stroke="#0c7034" stroke-width="1.1"/></svg>
<div style="top:486.84px;font-size:12px;line-height:16px;letter-spacing:0.094px;color:#dcdcdc;white-space:nowrap;font-weight:bold;left:1834.5px;">Rigidbody</div>
<svg style="left:2233px;top:488.5px;" width="11" height="11" viewBox="0 0 11 11"><circle cx="5.5" cy="5.5" r="5.4" fill="#c4c4c4"/><path d="M3.7 4.3 C3.7 2.0 7.4 2.0 7.4 4.2 C7.4 5.6 5.6 5.5 5.6 7.0" fill="none" stroke="#3e3e3e" stroke-width="1.3"/><rect x="4.9" y="7.9" width="1.4" height="1.4" fill="#3e3e3e"/></svg>
<svg style="left:2253px;top:488.5px;" width="12" height="11" viewBox="0 0 12 11"><path d="M0.5 3 H6.4 M9 3 H11.5 M0.5 8 H2.8 M5.4 8 H11.5" stroke="#c4c4c4" stroke-width="1.2"/><path d="M7.6 0.6 V5.4 M4.1 5.6 V10.4" stroke="#c4c4c4" stroke-width="1.4"/></svg>
<svg style="left:2277px;top:488px;" width="4" height="13" viewBox="0 0 4 13"><rect x="0.6" y="0.4" width="2.2" height="2.2" fill="#c4c4c4"/><rect x="0.6" y="4.7" width="2.2" height="2.2" fill="#c4c4c4"/><rect x="0.6" y="9" width="2.2" height="2.2" fill="#c4c4c4"/></svg>
<div style="top:510.84px;font-size:12px;line-height:16px;letter-spacing:0.582px;color:#c4c4c4;white-space:nowrap;left:1793.3px;">Mass</div>
<div style="left:1987px;top:509px;width:301px;height:18px;background:#2a2a2a;border-radius:3px;border:1px solid #212121;border-top-color:#131313;border-bottom-color:#2f2f2f;"></div>
<div style="top:510.84px;font-size:12px;line-height:16px;letter-spacing:0.280px;color:#d2d2d2;white-space:nowrap;left:1990.2px;">1</div>
<div style="top:530.84px;font-size:12px;line-height:16px;letter-spacing:0.248px;color:#c4c4c4;white-space:nowrap;left:1793.3px;">Drag</div>
<div style="left:1987px;top:529px;width:301px;height:18px;background:#2a2a2a;border-radius:3px;border:1px solid #212121;border-top-color:#131313;border-bottom-color:#2f2f2f;"></div>
<div style="top:530.84px;font-size:12px;line-height:16px;letter-spacing:0.280px;color:#d2d2d2;white-space:nowrap;left:1990.2px;">0</div>
<div style="top:550.84px;font-size:12px;line-height:16px;letter-spacing:0.191px;color:#c4c4c4;white-space:nowrap;left:1793.3px;">Angular Drag</div>
<div style="left:1987px;top:549px;width:301px;height:18px;background:#2a2a2a;border-radius:3px;border:1px solid #212121;border-top-color:#131313;border-bottom-color:#2f2f2f;"></div>
<div style="top:550.84px;font-size:12px;line-height:16px;letter-spacing:0.280px;color:#d2d2d2;white-space:nowrap;left:1990.2px;">0.05</div>
<div style="top:570.84px;font-size:12px;line-height:16px;letter-spacing:0.262px;color:#c4c4c4;white-space:nowrap;left:1793.3px;">Automatic Center Of Mass</div>
<div style="left:1987px;top:571px;width:14px;height:14px;background:#2a2a2a;border-radius:3px;border:1px solid #212121;border-top-color:#161616;"></div>
<svg style="left:1987px;top:571px;" width="14" height="14" viewBox="0 0 14 14"><path d="M3.2 7.4 L5.8 10 L11 4.2" fill="none" stroke="#e6e6e6" stroke-width="1.7"/></svg>
<div style="top:590.84px;font-size:12px;line-height:16px;letter-spacing:0.407px;color:#c4c4c4;white-space:nowrap;left:1793.3px;">Automatic Tensor</div>
<div style="left:1987px;top:591px;width:14px;height:14px;background:#2a2a2a;border-radius:3px;border:1px solid #212121;border-top-color:#161616;"></div>
<svg style="left:1987px;top:591px;" width="14" height="14" viewBox="0 0 14 14"><path d="M3.2 7.4 L5.8 10 L11 4.2" fill="none" stroke="#e6e6e6" stroke-width="1.7"/></svg>
<div style="top:610.84px;font-size:12px;line-height:16px;letter-spacing:0.211px;color:#c4c4c4;white-space:nowrap;left:1793.3px;">Use Gravity</div>
<div style="left:1987px;top:611px;width:14px;height:14px;background:#2a2a2a;border-radius:3px;border:1px solid #212121;border-top-color:#161616;"></div>
<svg style="left:1987px;top:611px;" width="14" height="14" viewBox="0 0 14 14"><path d="M3.2 7.4 L5.8 10 L11 4.2" fill="none" stroke="#e6e6e6" stroke-width="1.7"/></svg>
<div style="top:630.84px;font-size:12px;line-height:16px;letter-spacing:0.137px;color:#c4c4c4;white-space:nowrap;left:1793.3px;">Is Kinematic</div>
<div style="left:1987px;top:631px;width:14px;height:14px;background:#2a2a2a;border-radius:3px;border:1px solid #212121;border-top-color:#161616;"></div>
<div style="top:650.84px;font-size:12px;line-height:16px;letter-spacing:0.299px;color:#c4c4c4;white-space:nowrap;left:1793.3px;">Interpolate</div>
<div style="left:1987px;top:649px;width:301px;height:18px;background:#515151;border-radius:3px;border:1px solid #303030;border-bottom-color:#242424;"></div>
<div style="top:649.84px;font-size:12px;line-height:16px;letter-spacing:0.280px;color:#e4e4e4;white-space:nowrap;left:1991.6px;">None</div>
<svg style="left:2272.5px;top:655.4px;" width="8.5" height="5.2" viewBox="0 0 8.5 5.2"><path d="M0.3 0.3 H8.2 L4.25 5Z" fill="#d0d0d0"/></svg>
<div style="top:670.84px;font-size:12px;line-height:16px;letter-spacing:0.349px;color:#c4c4c4;white-space:nowrap;left:1793.3px;">Collision Detection</div>
<div style="left:1987px;top:669px;width:301px;height:18px;background:#515151;border-radius:3px;border:1px solid #303030;border-bottom-color:#242424;"></div>
<div style="top:669.84px;font-size:12px;line-height:16px;letter-spacing:0.280px;color:#e4e4e4;white-space:nowrap;left:1991.6px;">Discrete</div>
<svg style="left:2272.5px;top:675.4px;" width="8.5" height="5.2" viewBox="0 0 8.5 5.2"><path d="M0.3 0.3 H8.2 L4.25 5Z" fill="#d0d0d0"/></svg>
<svg style="left:1781.9px;top:693.8px;" width="8" height="10" viewBox="0 0 8 10"><path d="M0.4 0.4 L7.6 5 L0.4 9.6Z" fill="#7e7e7e"/></svg>
<div style="top:690.84px;font-size:12px;line-height:16px;letter-spacing:0.301px;color:#c4c4c4;white-space:nowrap;left:1793.3px;">Constraints</div>
<svg style="left:1781.9px;top:713.8px;" width="8" height="10" viewBox="0 0 8 10"><path d="M0.4 0.4 L7.6 5 L0.4 9.6Z" fill="#7e7e7e"/></svg>
<div style="top:710.84px;font-size:12px;line-height:16px;letter-spacing:0.242px;color:#c4c4c4;white-space:nowrap;left:1793.3px;">Layer Overrides</div>
<div style="left:1774px;top:734px;width:518px;height:1px;background:#1a1a1a;"></div>
<div style="left:1774px;top:735px;width:518px;height:20px;background:#3e3e3e;"></div>
<div style="left:1774px;top:755px;width:518px;height:1px;background:#353535;"></div>
<svg style="left:1780px;top:741.5px;" width="9.5" height="8.5" viewBox="0 0 9.5 8.5"><path d="M0.4 0.4 H9.1 L4.75 8.2Z" fill="#747474"/></svg>
<svg style="left:1794px;top:737px;" width="16" height="16" viewBox="0 0 16 16"><path d="M2.6 1.4 H9.6 L12.6 4.4 V14.4 H2.6Z" fill="#f2f2f2"/><path d="M9.6 1.4 V4.4 H12.6Z" fill="#bcbcbc"/><path d="M8.6 5.2 A3.4 3.4 0 1 0 8.6 11" fill="none" stroke="#2aa8dc" stroke-width="1.4"/><path d="M7 7 V9.4 M9 7 V9.4 M6 7.6 H10 M6 8.8 H10" stroke="#27a35a" stroke-width="0.7"/><circle cx="11" cy="11.8" r="3.6" fill="#16c25e" stroke="#0d7a3a" stroke-width="0.6"/><path d="M8.8 11.8 H13.2 M11 9.6 V14" stroke="#0c7034" stroke-width="1.1"/></svg>
<div style="top:737.84px;font-size:12px;line-height:16px;letter-spacing:-0.002px;color:#dcdcdc;white-space:nowrap;font-weight:bold;left:1834.5px;">VRC Pickup</div>
<svg style="left:2233px;top:739.5px;" width="11" height="11" viewBox="0 0 11 11"><circle cx="5.5" cy="5.5" r="5.4" fill="#c4c4c4"/><path d="M3.7 4.3 C3.7 2.0 7.4 2.0 7.4 4.2 C7.4 5.6 5.6 5.5 5.6 7.0" fill="none" stroke="#3e3e3e" stroke-width="1.3"/><rect x="4.9" y="7.9" width="1.4" height="1.4" fill="#3e3e3e"/></svg>
<svg style="left:2253px;top:739.5px;" width="12" height="11" viewBox="0 0 12 11"><path d="M0.5 3 H6.4 M9 3 H11.5 M0.5 8 H2.8 M5.4 8 H11.5" stroke="#c4c4c4" stroke-width="1.2"/><path d="M7.6 0.6 V5.4 M4.1 5.6 V10.4" stroke="#c4c4c4" stroke-width="1.4"/></svg>
<svg style="left:2277px;top:739px;" width="4" height="13" viewBox="0 0 4 13"><rect x="0.6" y="0.4" width="2.2" height="2.2" fill="#c4c4c4"/><rect x="0.6" y="4.7" width="2.2" height="2.2" fill="#c4c4c4"/><rect x="0.6" y="9" width="2.2" height="2.2" fill="#c4c4c4"/></svg>
<div style="top:760.84px;font-size:12px;line-height:16px;letter-spacing:0.354px;color:#c4c4c4;white-space:nowrap;left:1793.3px;">Version</div>
<div style="left:1913.7px;top:759px;width:338.3px;height:19px;background:#515151;border-radius:3px;border:1px solid #303030;border-bottom-color:#242424;"></div>
<div style="top:760.84px;font-size:12px;line-height:16px;letter-spacing:-0.004px;color:#e4e4e4;white-space:nowrap;left:1918.3px;">Version 1.1</div>
<svg style="left:2236.5px;top:765.9px;" width="8.5" height="5.2" viewBox="0 0 8.5 5.2"><path d="M0.3 0.3 H8.2 L4.25 5Z" fill="#d0d0d0"/></svg>
<div style="left:2253px;top:759px;width:30px;height:19px;background:#585858;border-radius:3px;border:1px solid #303030;border-bottom-color:#242424;"></div>
<div style="top:760.84px;font-size:12px;line-height:16px;letter-spacing:0.280px;color:#eeeeee;white-space:nowrap;left:2264.52px;">?</div>
<div style="top:789.84px;font-size:12px;line-height:16px;letter-spacing:0.367px;color:#c4c4c4;white-space:nowrap;left:1793.3px;">Auto Hold</div>
<div style="left:1914px;top:791px;width:14px;height:14px;background:#2a2a2a;border-radius:3px;border:1px solid #212121;border-top-color:#161616;"></div>
<div style="top:810.84px;font-size:12px;line-height:16px;letter-spacing:0.221px;color:#d6d6d6;white-space:nowrap;font-weight:bold;left:1793.3px;">Interaction Text</div>
<div style="left:1988px;top:809px;width:300px;height:18px;background:#2a2a2a;border-radius:3px;border:1px solid #212121;border-top-color:#131313;border-bottom-color:#2f2f2f;"></div>
<div style="top:830.84px;font-size:12px;line-height:16px;letter-spacing:-0.021px;color:#d6d6d6;white-space:nowrap;font-weight:bold;left:1793.3px;">Proximity</div>
<div style="left:1988px;top:837px;width:245px;height:2px;background:#5e5e5e;"></div>
<div style="left:1993px;top:832.9px;width:10px;height:10px;background:#999999;border-radius:5px;"></div>
<div style="left:2238px;top:829.5px;width:50px;height:18.5px;background:#2a2a2a;border-radius:3px;border:1px solid #212121;border-top-color:#131313;border-bottom-color:#2f2f2f;"></div>
<div style="top:831.84px;font-size:12px;line-height:16px;letter-spacing:0.280px;color:#d2d2d2;white-space:nowrap;left:2241.2px;">2</div>
<div style="top:852.84px;font-size:12px;line-height:16px;letter-spacing:0.091px;color:#d6d6d6;white-space:nowrap;font-weight:bold;left:1793.3px;">Orientation</div>
<div style="left:1988px;top:851px;width:300px;height:18px;background:#515151;border-radius:3px;border:1px solid #303030;border-bottom-color:#242424;"></div>
<div style="top:852.84px;font-size:12px;line-height:16px;letter-spacing:0.180px;color:#e4e4e4;white-space:nowrap;font-weight:bold;left:1992.6px;">Any</div>
<svg style="left:2272.5px;top:857.4px;" width="8.5" height="5.2" viewBox="0 0 8.5 5.2"><path d="M0.3 0.3 H8.2 L4.25 5Z" fill="#d0d0d0"/></svg>
<div style="top:873.84px;font-size:12px;line-height:16px;letter-spacing:-0.094px;color:#d6d6d6;white-space:nowrap;font-weight:bold;left:1793.3px;">Exact Gun</div>
<div style="left:1988px;top:872px;width:300px;height:18px;background:#2a2a2a;border-radius:3px;border:1px solid #212121;border-top-color:#131313;border-bottom-color:#2f2f2f;"></div>
<svg style="left:1991px;top:875px;" width="12" height="12" viewBox="0 0 12 12"><path d="M5.8 2.4 V5.4" stroke="#a6ee4c" stroke-width="2" stroke-linecap="round"/><path d="M7.2 7.2 L9.8 8.8" stroke="#f0683a" stroke-width="2" stroke-linecap="round"/><path d="M4.4 7.2 L1.8 8.8" stroke="#5ac3f5" stroke-width="2" stroke-linecap="round"/></svg>
<div style="top:873.84px;font-size:12px;line-height:16px;letter-spacing:0.187px;color:#d6d6d6;white-space:nowrap;font-weight:bold;left:2005.3px;">None (Transform)</div>
<div style="left:2270px;top:873px;width:17px;height:16px;background:#343434;border-radius:0 2px 2px 0;"></div>
<svg style="left:2273px;top:875.5px;" width="11" height="11" viewBox="0 0 11 11"><circle cx="5.5" cy="5.5" r="4.6" fill="none" stroke="#c4c4c4" stroke-width="1.1"/><circle cx="5.5" cy="5.5" r="1.7" fill="#c4c4c4"/></svg>
<div style="top:893.84px;font-size:12px;line-height:16px;letter-spacing:-0.052px;color:#d6d6d6;white-space:nowrap;font-weight:bold;left:1793.3px;">Exact Grip</div>
<div style="left:1988px;top:892px;width:300px;height:18px;background:#2a2a2a;border-radius:3px;border:1px solid #212121;border-top-color:#131313;border-bottom-color:#2f2f2f;"></div>
<svg style="left:1991px;top:895px;" width="12" height="12" viewBox="0 0 12 12"><path d="M5.8 2.4 V5.4" stroke="#a6ee4c" stroke-width="2" stroke-linecap="round"/><path d="M7.2 7.2 L9.8 8.8" stroke="#f0683a" stroke-width="2" stroke-linecap="round"/><path d="M4.4 7.2 L1.8 8.8" stroke="#5ac3f5" stroke-width="2" stroke-linecap="round"/></svg>
<div style="top:893.84px;font-size:12px;line-height:16px;letter-spacing:0.187px;color:#d6d6d6;white-space:nowrap;font-weight:bold;left:2005.3px;">None (Transform)</div>
<div style="left:2270px;top:893px;width:17px;height:16px;background:#343434;border-radius:0 2px 2px 0;"></div>
<svg style="left:2273px;top:895.5px;" width="11" height="11" viewBox="0 0 11 11"><circle cx="5.5" cy="5.5" r="4.6" fill="none" stroke="#c4c4c4" stroke-width="1.1"/><circle cx="5.5" cy="5.5" r="1.7" fill="#c4c4c4"/></svg>
<div style="top:911.84px;font-size:12px;line-height:16px;letter-spacing:0.014px;color:#d6d6d6;white-space:nowrap;font-weight:bold;left:1793.3px;">Pickupable</div>
<div style="left:1988px;top:913px;width:14px;height:14px;background:#2a2a2a;border-radius:3px;border:1px solid #212121;border-top-color:#161616;"></div>
<svg style="left:1988px;top:913px;" width="14" height="14" viewBox="0 0 14 14"><path d="M3.2 7.4 L5.8 10 L11 4.2" fill="none" stroke="#e6e6e6" stroke-width="1.7"/></svg>
<div style="top:930.84px;font-size:12px;line-height:16px;letter-spacing:0.119px;color:#d6d6d6;white-space:nowrap;font-weight:bold;left:1793.3px;">Disallow Theft</div>
<div style="left:1988px;top:932px;width:14px;height:14px;background:#2a2a2a;border-radius:3px;border:1px solid #212121;border-top-color:#161616;"></div>
<svg style="left:1988px;top:932px;" width="14" height="14" viewBox="0 0 14 14"><path d="M3.2 7.4 L5.8 10 L11 4.2" fill="none" stroke="#e6e6e6" stroke-width="1.7"/></svg>
<div style="left:1793.3px;top:948px;width:192.5px;height:20px;overflow:hidden;"><div style="left:0;top:2px;font-weight:bold;color:#d6d6d6;white-space:nowrap;letter-spacing:-0.03px;line-height:16px;">Allow Manipulation When Equipped</div></div>
<div style="left:1988px;top:951px;width:14px;height:14px;background:#2a2a2a;border-radius:3px;border:1px solid #212121;border-top-color:#161616;"></div>
<div style="top:970.84px;font-size:12px;line-height:16px;letter-spacing:0.222px;color:#d6d6d6;white-space:nowrap;font-weight:bold;left:1793.3px;">Momentum Transfer Method</div>
<div style="left:1988px;top:969px;width:300px;height:18px;background:#515151;border-radius:3px;border:1px solid #303030;border-bottom-color:#242424;"></div>
<div style="top:970.84px;font-size:12px;line-height:16px;letter-spacing:0.180px;color:#e4e4e4;white-space:nowrap;font-weight:bold;left:1992.6px;">Force</div>
<svg style="left:2272.5px;top:975.4px;" width="8.5" height="5.2" viewBox="0 0 8.5 5.2"><path d="M0.3 0.3 H8.2 L4.25 5Z" fill="#d0d0d0"/></svg>
<div style="top:991.84px;font-size:12px;line-height:16px;letter-spacing:0.105px;color:#d6d6d6;white-space:nowrap;font-weight:bold;left:1793.3px;">Throw Velocity Boost Min Speed</div>
<div style="left:1988px;top:990px;width:300px;height:18px;background:#2a2a2a;border-radius:3px;border:1px solid #212121;border-top-color:#131313;border-bottom-color:#2f2f2f;"></div>
<div style="top:991.84px;font-size:12px;line-height:16px;letter-spacing:0.180px;color:#e0e0e0;white-space:nowrap;font-weight:bold;left:1991.2px;">1</div>
<div style="top:1011.84px;font-size:12px;line-height:16px;letter-spacing:0.107px;color:#d6d6d6;white-space:nowrap;font-weight:bold;left:1793.3px;">Throw Velocity Boost Scale</div>
<div style="left:1988px;top:1010px;width:300px;height:18px;background:#2a2a2a;border-radius:3px;border:1px solid #212121;border-top-color:#131313;border-bottom-color:#2f2f2f;"></div>
<div style="top:1011.84px;font-size:12px;line-height:16px;letter-spacing:0.180px;color:#e0e0e0;white-space:nowrap;font-weight:bold;left:1991.2px;">1</div>
<div style="left:1774px;top:1036px;width:518px;height:1px;background:#1a1a1a;"></div>
<div style="left:1774px;top:1037px;width:518px;height:20px;background:#3e3e3e;"></div>
<div style="left:1774px;top:1057px;width:518px;height:1px;background:#353535;"></div>
<svg style="left:1780px;top:1043.5px;" width="9.5" height="8.5" viewBox="0 0 9.5 8.5"><path d="M0.4 0.4 H9.1 L4.75 8.2Z" fill="#747474"/></svg>
<svg style="left:1794px;top:1039px;" width="16" height="16" viewBox="0 0 16 16"><path d="M2.6 1.4 H9.6 L12.6 4.4 V14.4 H2.6Z" fill="#f2f2f2"/><path d="M9.6 1.4 V4.4 H12.6Z" fill="#bcbcbc"/><path d="M8.6 5.2 A3.4 3.4 0 1 0 8.6 11" fill="none" stroke="#2aa8dc" stroke-width="1.4"/><path d="M7 7 V9.4 M9 7 V9.4 M6 7.6 H10 M6 8.8 H10" stroke="#27a35a" stroke-width="0.7"/><circle cx="11" cy="11.8" r="3.6" fill="#16c25e" stroke="#0d7a3a" stroke-width="0.6"/><path d="M8.8 11.8 H13.2 M11 9.6 V14" stroke="#0c7034" stroke-width="1.1"/></svg>
<div style="top:1039.84px;font-size:12px;line-height:16px;letter-spacing:0.098px;color:#dcdcdc;white-space:nowrap;font-weight:bold;left:1834.5px;">VRC Object Sync</div>
<svg style="left:2233px;top:1041.5px;" width="11" height="11" viewBox="0 0 11 11"><circle cx="5.5" cy="5.5" r="5.4" fill="#c4c4c4"/><path d="M3.7 4.3 C3.7 2.0 7.4 2.0 7.4 4.2 C7.4 5.6 5.6 5.5 5.6 7.0" fill="none" stroke="#3e3e3e" stroke-width="1.3"/><rect x="4.9" y="7.9" width="1.4" height="1.4" fill="#3e3e3e"/></svg>
<svg style="left:2253px;top:1041.5px;" width="12" height="11" viewBox="0 0 12 11"><path d="M0.5 3 H6.4 M9 3 H11.5 M0.5 8 H2.8 M5.4 8 H11.5" stroke="#c4c4c4" stroke-width="1.2"/><path d="M7.6 0.6 V5.4 M4.1 5.6 V10.4" stroke="#c4c4c4" stroke-width="1.4"/></svg>
<svg style="left:2277px;top:1041px;" width="4" height="13" viewBox="0 0 4 13"><rect x="0.6" y="0.4" width="2.2" height="2.2" fill="#c4c4c4"/><rect x="0.6" y="4.7" width="2.2" height="2.2" fill="#c4c4c4"/><rect x="0.6" y="9" width="2.2" height="2.2" fill="#c4c4c4"/></svg>
<div style="top:1061.84px;font-size:12px;line-height:16px;letter-spacing:0.388px;color:#8a8a8a;white-space:nowrap;left:1793.3px;">Script</div>
<div style="left:1988px;top:1061px;width:300px;height:18px;background:#343434;border-radius:3px;border:1px solid #2e2e2e;border-top-color:#292929;"></div>
<svg style="left:1992px;top:1064.5px;" width="9" height="11" viewBox="0 0 9 11"><rect x="0.5" y="0.5" width="8" height="10" fill="#8a8a8a"/><path d="M5.8 4.4 A1.9 1.9 0 1 0 5.8 7.6" fill="none" stroke="#5b88a0" stroke-width="0.9"/></svg>
<div style="top:1061.84px;font-size:12px;line-height:16px;letter-spacing:0.049px;color:#8a8a8a;white-space:nowrap;font-weight:bold;left:2005.3px;">VRCObjectSync</div>
<div style="left:2270px;top:1062px;width:17px;height:16px;background:#373737;border-radius:0 2px 2px 0;"></div>
<svg style="left:2273px;top:1064.5px;" width="11" height="11" viewBox="0 0 11 11"><circle cx="5.5" cy="5.5" r="4.6" fill="none" stroke="#777777" stroke-width="1.1"/><circle cx="5.5" cy="5.5" r="1.7" fill="#777777"/></svg>
<div style="left:1793.3px;top:1079px;width:191px;height:20px;overflow:hidden;"><div style="left:0;top:1.6px;font-weight:bold;color:#d6d6d6;white-space:nowrap;letter-spacing:-0.01px;line-height:16px;">Allow Collision Ownership Transfer</div></div>
<div style="left:1988px;top:1082px;width:14px;height:14px;background:#2a2a2a;border-radius:3px;border:1px solid #212121;border-top-color:#161616;"></div>
<svg style="left:1988px;top:1082px;" width="14" height="14" viewBox="0 0 14 14"><path d="M3.2 7.4 L5.8 10 L11 4.2" fill="none" stroke="#e6e6e6" stroke-width="1.7"/></svg>
<div style="top:1099.84px;font-size:12px;line-height:16px;letter-spacing:0.012px;color:#d6d6d6;white-space:nowrap;font-weight:bold;left:1793.3px;">Force Kinematic On Remote</div>
<div style="left:1988px;top:1101px;width:14px;height:14px;background:#2a2a2a;border-radius:3px;border:1px solid #212121;border-top-color:#161616;"></div>
<svg style="left:1988px;top:1101px;" width="14" height="14" viewBox="0 0 14 14"><path d="M3.2 7.4 L5.8 10 L11 4.2" fill="none" stroke="#e6e6e6" stroke-width="1.7"/></svg>
<div style="left:1774px;top:1125px;width:518px;height:1px;background:#1a1a1a;"></div>
<div style="left:1918px;top:1134px;width:230px;height:24px;background:#585858;border-radius:3px;border:1px solid #303030;border-bottom-color:#242424;"></div>
<div style="top:1137.84px;font-size:12px;line-height:16px;letter-spacing:0.252px;color:#eeeeee;white-space:nowrap;left:1988px;">Add Component</div>
<div style="left:1774px;top:305.2px;width:2.1px;height:20.4px;background:#0f88d6;"></div>
<div style="left:1774px;top:328px;width:2.1px;height:148.7px;background:#0f88d6;"></div>
<div style="left:1774px;top:478.9px;width:2.1px;height:1.2px;background:#0f88d6;"></div>
<div style="left:1774px;top:485.2px;width:2.1px;height:20.4px;background:#0f88d6;"></div>
<div style="left:1774px;top:508px;width:2.1px;height:219.7px;background:#0f88d6;"></div>
<div style="left:1774px;top:729.9px;width:2.1px;height:1.2px;background:#0f88d6;"></div>
<div style="left:1774px;top:736.2px;width:2.1px;height:20.4px;background:#0f88d6;"></div>
<div style="left:1774px;top:810px;width:2.1px;height:220.6px;background:#0f88d6;"></div>
<div style="left:1774px;top:1031.9px;width:2.1px;height:0.9px;background:#0f88d6;"></div>
<div style="left:1774px;top:1037.8px;width:2.1px;height:20.4px;background:#0f88d6;"></div>
<div style="left:1774px;top:1061.5px;width:2.1px;height:59.5px;background:#0f88d6;"></div>
<div style="left:1px;top:879px;width:1771px;height:490px;background:#383838;"></div>
<div style="left:1px;top:879px;width:1771px;height:19px;background:#282828;"></div>
<div style="left:82.7px;top:879px;width:86px;height:19px;background:#3c3c3c;border-radius:3px 3px 0 0;"></div>
<svg style="left:7.5px;top:883.5px;" width="13" height="11" viewBox="0 0 13 11"><path d="M0.4 0.6 H4.6 L6 2.4 H12.4 V10.4 H0.4Z" fill="#c4c4c4"/></svg>
<div style="top:881.84px;font-size:12px;line-height:16px;letter-spacing:0.322px;color:#c4c4c4;white-space:nowrap;left:24.4px;">Project</div>
<svg style="left:90.5px;top:883px;" width="11" height="12" viewBox="0 0 11 12"><rect x="0.6" y="0.6" width="9.6" height="10.6" fill="#c8c8c8" rx="0.8"/><path d="M2 3.2 H8.8 M2 5.4 H8.8 M2 7.6 H8.8 M2 9.6 H6.2" stroke="#3c3c3c" stroke-width="1"/></svg>
<div style="top:881.84px;font-size:12px;line-height:16px;letter-spacing:0.182px;color:#d2d2d2;white-space:nowrap;left:106.2px;">Console</div>
<svg style="left:177.5px;top:883px;" width="12.4" height="12.4" viewBox="0 0 12.4 12.4"><circle cx="6.2" cy="6.2" r="6" fill="#c8c8c8"/><path d="M6.2 1.6 V6.6 H10.4" stroke="#282828" stroke-width="1.3" fill="none"/></svg>
<div style="top:881.84px;font-size:12px;line-height:16px;letter-spacing:0.182px;color:#c4c4c4;white-space:nowrap;left:194px;">Animation</div>
<svg style="left:1757px;top:882px;" width="4" height="13" viewBox="0 0 4 13"><rect x="0.8" y="0.8" width="2.2" height="2.2" fill="#c4c4c4"/><rect x="0.8" y="5" width="2.2" height="2.2" fill="#c4c4c4"/><rect x="0.8" y="9.2" width="2.2" height="2.2" fill="#c4c4c4"/></svg>
<div style="left:1px;top:898px;width:1771px;height:20px;background:#3c3c3c;"></div>
<div style="left:1px;top:918px;width:1771px;height:1px;background:#232323;"></div>
<div style="left:40.2px;top:898px;width:1px;height:20px;background:#2a2a2a;"></div>
<div style="left:57.2px;top:898px;width:1px;height:20px;background:#2a2a2a;"></div>
<div style="left:116px;top:898px;width:1px;height:20px;background:#2a2a2a;"></div>
<div style="left:190px;top:898px;width:1px;height:20px;background:#2a2a2a;"></div>
<div style="left:241px;top:898px;width:1px;height:20px;background:#2a2a2a;"></div>
<div style="top:900.84px;font-size:12px;line-height:16px;letter-spacing:0.165px;color:#c4c4c4;white-space:nowrap;left:5.2px;">Clear</div>
<svg style="left:45px;top:906px;" width="8" height="5" viewBox="0 0 8 5"><path d="M0.3 0.3 H7.7 L4 4.8Z" fill="#c4c4c4"/></svg>
<div style="top:900.84px;font-size:12px;line-height:16px;letter-spacing:0.189px;color:#c4c4c4;white-space:nowrap;left:61.2px;">Collapse</div>
<div style="top:900.84px;font-size:12px;line-height:16px;letter-spacing:-0.057px;color:#c4c4c4;white-space:nowrap;left:121px;">Error Pause</div>
<div style="top:900.84px;font-size:12px;line-height:16px;letter-spacing:0.042px;color:#c4c4c4;white-space:nowrap;left:194px;">Editor</div>
<svg style="left:228.7px;top:906px;" width="8" height="5" viewBox="0 0 8 5"><path d="M0.3 0.3 H7.7 L4 4.8Z" fill="#c4c4c4"/></svg>
<div style="left:1366px;top:900.5px;width:297px;height:16px;background:#262626;border-radius:3px;border:1px solid #1c1c1c;"></div>
<svg style="left:1368.5px;top:904px;" width="9" height="9" viewBox="0 0 9 9"><circle cx="3.6" cy="3.6" r="2.5" fill="none" stroke="#d0d0d0" stroke-width="1.3"/><path d="M5.4 5.4 L8.2 8.2" stroke="#d0d0d0" stroke-width="1.5"/></svg>
<div style="left:1667px;top:898px;width:32px;height:20px;background:#505050;"></div>
<div style="left:1700px;top:898px;width:32px;height:20px;background:#505050;"></div>
<div style="left:1666px;top:898px;width:1px;height:20px;background:#2a2a2a;"></div>
<div style="left:1699px;top:898px;width:1px;height:20px;background:#2a2a2a;"></div>
<div style="left:1732px;top:898px;width:1px;height:20px;background:#2a2a2a;"></div>
<svg style="left:1671.5px;top:900.5px;" width="13.5" height="14.5" viewBox="0 0 27 29"><ellipse cx="13" cy="12.6" rx="12.8" ry="12.4" fill="#ececec"/><path d="M17 22 L24.6 28 L23 19Z" fill="#ececec"/><path d="M11.6 4.6 H14.4 L13.8 15.6 H12.2Z" fill="#2e2e2e"/><circle cx="13" cy="19.2" r="1.9" fill="#2e2e2e"/></svg>
<div style="top:900.84px;font-size:12px;line-height:16px;letter-spacing:0.327px;color:#c4c4c4;white-space:nowrap;left:1687px;">8</div>
<svg style="left:1704px;top:900.5px;" width="14.04" height="14.04" viewBox="0 0 27 27"><path d="M13.2 1.4 L25.6 25 H0.8Z" fill="#ffc107" stroke="#ffc107" stroke-width="1.6" stroke-linejoin="round"/><path d="M11.8 9 H14.6 L14 18.6 H12.4Z" fill="#505050"/><circle cx="13.2" cy="21.6" r="1.8" fill="#505050"/></svg>
<div style="top:900.84px;font-size:12px;line-height:16px;letter-spacing:0.327px;color:#c4c4c4;white-space:nowrap;left:1720px;">7</div>
<svg style="left:1737.5px;top:901px;" width="14" height="14" viewBox="0 0 14 14"><path d="M4.2 0.6 H9.8 L13.4 4.2 V9.8 L9.8 13.4 H4.2 L0.6 9.8 V4.2Z" fill="#ff534a"/><path d="M6.1 2.8 H7.9 L7.6 8.4 H6.4Z" fill="#3c3c3c"/><circle cx="7" cy="10.6" r="1.1" fill="#3c3c3c"/></svg>
<div style="top:900.84px;font-size:12px;line-height:16px;letter-spacing:-0.173px;color:#c4c4c4;white-space:nowrap;left:1753px;">15</div>
<div style="left:1px;top:919px;width:1759px;height:11px;background:#373737;"></div>
<div style="left:1px;top:919px;width:1759px;height:11px;overflow:hidden;">
<svg style="left:10px;top:-21.4px;" width="27" height="27" viewBox="0 0 27 27"><path d="M13.2 1.4 L25.6 25 H0.8Z" fill="#ffc107" stroke="#ffc107" stroke-width="1.6" stroke-linejoin="round"/><path d="M11.8 9 H14.6 L14 18.6 H12.4Z" fill="#373737"/><circle cx="13.2" cy="21.6" r="1.8" fill="#373737"/></svg>
<div style="top:-9.16px;font-size:12px;line-height:16px;letter-spacing:0.246px;color:#c4c4c4;white-space:nowrap;left:40.6px;">UnityEngine.Debug:LogWarningFormat (string,object[])</div>
</div>
<div style="left:1px;top:930px;width:1759px;height:38px;background:#3f3f3f;"></div>
<svg style="left:11px;top:935.8px;" width="27" height="29" viewBox="0 0 27 29"><ellipse cx="13" cy="12.6" rx="12.8" ry="12.4" fill="#ececec"/><path d="M17 22 L24.6 28 L23 19Z" fill="#ececec"/><path d="M11.6 4.6 H14.4 L13.8 15.6 H12.2Z" fill="#2e2e2e"/><circle cx="13" cy="19.2" r="1.9" fill="#2e2e2e"/></svg>
<div style="top:933.84px;font-size:12px;line-height:16px;letter-spacing:0.264px;color:#c4c4c4;white-space:nowrap;left:41.6px;">[19:33:31] [<span style="color:#1a9b55">UdonSharp</span>] Compile of 12 scripts finished in 00:00.125</div>
<div style="top:947.84px;font-size:12px;line-height:16px;letter-spacing:0.213px;color:#c4c4c4;white-space:nowrap;left:41.6px;">UnityEngine.Debug:Log (object)</div>
<div style="left:1px;top:968px;width:1759px;height:38px;background:#373737;"></div>
<svg style="left:11px;top:973.6px;" width="27" height="27" viewBox="0 0 27 27"><path d="M13.2 1.4 L25.6 25 H0.8Z" fill="#ffc107" stroke="#ffc107" stroke-width="1.6" stroke-linejoin="round"/><path d="M11.8 9 H14.6 L14 18.6 H12.4Z" fill="#373737"/><circle cx="13.2" cy="21.6" r="1.8" fill="#373737"/></svg>
<div style="top:971.84px;font-size:12px;line-height:16px;letter-spacing:0.259px;color:#c4c4c4;white-space:nowrap;left:41.6px;">[19:33:32] Recovered 4 Network IDs from VRCWorld</div>
<div style="top:985.84px;font-size:12px;line-height:16px;letter-spacing:0.246px;color:#c4c4c4;white-space:nowrap;left:41.6px;">UnityEngine.Debug:LogWarningFormat (string,object[])</div>
<div style="left:1px;top:1006px;width:1759px;height:38px;background:#3f3f3f;"></div>
<svg style="left:11px;top:1011.8px;" width="27" height="29" viewBox="0 0 27 29"><ellipse cx="13" cy="12.6" rx="12.8" ry="12.4" fill="#ececec"/><path d="M17 22 L24.6 28 L23 19Z" fill="#ececec"/><path d="M11.6 4.6 H14.4 L13.8 15.6 H12.2Z" fill="#2e2e2e"/><circle cx="13" cy="19.2" r="1.9" fill="#2e2e2e"/></svg>
<div style="top:1009.84px;font-size:12px;line-height:16px;letter-spacing:0.264px;color:#c4c4c4;white-space:nowrap;left:41.6px;">[19:34:56] [<span style="color:#1a9b55">UdonSharp</span>] Compile of 12 scripts finished in 00:00.122</div>
<div style="top:1023.84px;font-size:12px;line-height:16px;letter-spacing:0.213px;color:#c4c4c4;white-space:nowrap;left:41.6px;">UnityEngine.Debug:Log (object)</div>
<div style="left:1px;top:1044px;width:1759px;height:38px;background:#373737;"></div>
<svg style="left:11px;top:1049.6px;" width="27" height="27" viewBox="0 0 27 27"><path d="M13.2 1.4 L25.6 25 H0.8Z" fill="#ffc107" stroke="#ffc107" stroke-width="1.6" stroke-linejoin="round"/><path d="M11.8 9 H14.6 L14 18.6 H12.4Z" fill="#373737"/><circle cx="13.2" cy="21.6" r="1.8" fill="#373737"/></svg>
<div style="top:1047.84px;font-size:12px;line-height:16px;letter-spacing:0.238px;color:#c4c4c4;white-space:nowrap;left:41.6px;">[19:34:58] Recovered 4 Network IDs from VRCWorld</div>
<div style="top:1061.84px;font-size:12px;line-height:16px;letter-spacing:0.246px;color:#c4c4c4;white-space:nowrap;left:41.6px;">UnityEngine.Debug:LogWarningFormat (string,object[])</div>
<div style="left:1px;top:1082px;width:1759px;height:38px;background:#3f3f3f;"></div>
<svg style="left:11px;top:1087.8px;" width="27" height="29" viewBox="0 0 27 29"><ellipse cx="13" cy="12.6" rx="12.8" ry="12.4" fill="#ececec"/><path d="M17 22 L24.6 28 L23 19Z" fill="#ececec"/><path d="M11.6 4.6 H14.4 L13.8 15.6 H12.2Z" fill="#2e2e2e"/><circle cx="13" cy="19.2" r="1.9" fill="#2e2e2e"/></svg>
<div style="top:1085.84px;font-size:12px;line-height:16px;letter-spacing:0.249px;color:#c4c4c4;white-space:nowrap;left:41.6px;">[19:35:15] [<span style="color:#1a9b55">UdonSharp</span>] Compile of 12 scripts finished in 00:00.269</div>
<div style="top:1099.84px;font-size:12px;line-height:16px;letter-spacing:0.213px;color:#c4c4c4;white-space:nowrap;left:41.6px;">UnityEngine.Debug:Log (object)</div>
<div style="left:1px;top:1120px;width:1759px;height:38px;background:#373737;"></div>
<svg style="left:11px;top:1125.6px;" width="27" height="27" viewBox="0 0 27 27"><path d="M13.2 1.4 L25.6 25 H0.8Z" fill="#ffc107" stroke="#ffc107" stroke-width="1.6" stroke-linejoin="round"/><path d="M11.8 9 H14.6 L14 18.6 H12.4Z" fill="#373737"/><circle cx="13.2" cy="21.6" r="1.8" fill="#373737"/></svg>
<div style="top:1123.84px;font-size:12px;line-height:16px;letter-spacing:0.218px;color:#c4c4c4;white-space:nowrap;left:41.6px;">[19:35:16] Recovered 4 Network IDs from VRCWorld</div>
<div style="top:1137.84px;font-size:12px;line-height:16px;letter-spacing:0.246px;color:#c4c4c4;white-space:nowrap;left:41.6px;">UnityEngine.Debug:LogWarningFormat (string,object[])</div>
<div style="left:1px;top:1158px;width:1759px;height:38px;background:#3f3f3f;"></div>
<svg style="left:11px;top:1163.8px;" width="27" height="29" viewBox="0 0 27 29"><ellipse cx="13" cy="12.6" rx="12.8" ry="12.4" fill="#ececec"/><path d="M17 22 L24.6 28 L23 19Z" fill="#ececec"/><path d="M11.6 4.6 H14.4 L13.8 15.6 H12.2Z" fill="#2e2e2e"/><circle cx="13" cy="19.2" r="1.9" fill="#2e2e2e"/></svg>
<div style="top:1161.84px;font-size:12px;line-height:16px;letter-spacing:0.232px;color:#c4c4c4;white-space:nowrap;left:41.6px;">[19:38:15] [<span style="color:#1a9b55">UdonSharp</span>] Compile of 12 scripts finished in 00:00.117</div>
<div style="top:1175.84px;font-size:12px;line-height:16px;letter-spacing:0.213px;color:#c4c4c4;white-space:nowrap;left:41.6px;">UnityEngine.Debug:Log (object)</div>
<div style="left:1px;top:1196px;width:1759px;height:38px;background:#373737;"></div>
<svg style="left:11px;top:1201.6px;" width="27" height="27" viewBox="0 0 27 27"><path d="M13.2 1.4 L25.6 25 H0.8Z" fill="#ffc107" stroke="#ffc107" stroke-width="1.6" stroke-linejoin="round"/><path d="M11.8 9 H14.6 L14 18.6 H12.4Z" fill="#373737"/><circle cx="13.2" cy="21.6" r="1.8" fill="#373737"/></svg>
<div style="top:1199.84px;font-size:12px;line-height:16px;letter-spacing:0.218px;color:#c4c4c4;white-space:nowrap;left:41.6px;">[19:38:16] Recovered 4 Network IDs from VRCWorld</div>
<div style="top:1213.84px;font-size:12px;line-height:16px;letter-spacing:0.246px;color:#c4c4c4;white-space:nowrap;left:41.6px;">UnityEngine.Debug:LogWarningFormat (string,object[])</div>
<div style="left:1px;top:1234px;width:1771px;height:1px;background:#232323;"></div>
<div style="left:1760px;top:919px;width:12px;height:315px;background:#353535;"></div>
<svg style="left:1762px;top:924px;" width="8" height="5" viewBox="0 0 8 5"><path d="M0.3 4.7 H7.7 L4 0.4Z" fill="#c4c4c4"/></svg>
<svg style="left:1762px;top:1223px;" width="8" height="5" viewBox="0 0 8 5"><path d="M0.3 0.3 H7.7 L4 4.6Z" fill="#c4c4c4"/></svg>
<div style="left:1761px;top:1053px;width:9px;height:164px;background:#5f5f5f;border-radius:4.5px;"></div>
</body></html>
